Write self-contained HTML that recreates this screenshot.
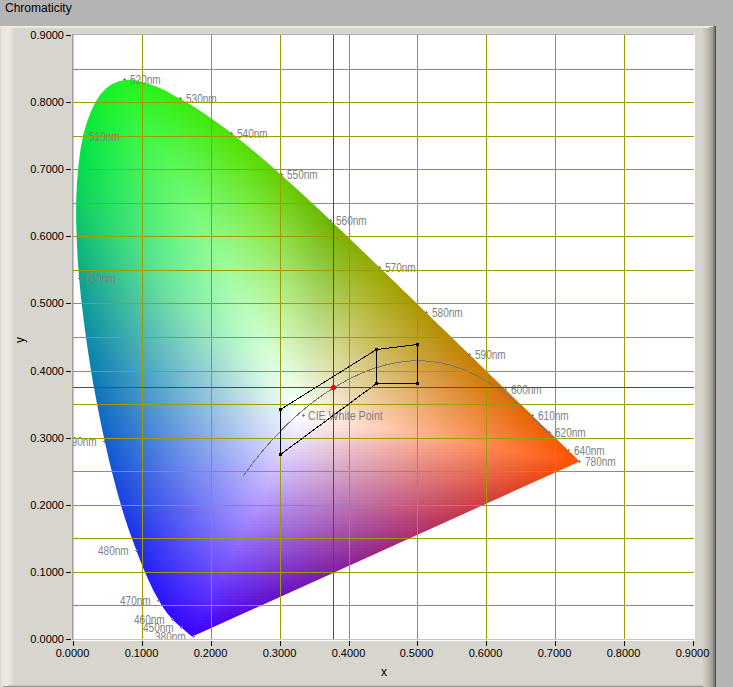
<!DOCTYPE html><html><head><meta charset="utf-8"><style>
html,body{margin:0;padding:0}
body{width:733px;height:687px;overflow:hidden;position:relative;background:#b4b4b4;font-family:"Liberation Sans",sans-serif}
.a{position:absolute}
#title{left:5px;top:1px;font-size:12px;color:#000;white-space:nowrap}
#frame{left:0;top:26px;width:716px;height:661px;background:#d8d4ce}
#plot{left:73px;top:35px;width:621px;height:604px;overflow:hidden;background:linear-gradient(90deg,#c8c8c8 1px,#fff 1px)}
#inner{left:-73px;top:-35px;width:733px;height:687px}
#field{left:0;top:0;width:733px;height:687px;clip-path:polygon(193.4px 636.1px,193.4px 636.1px,193.4px 636.1px,193.4px 636.1px,193.4px 636.1px,193.3px 636.2px,193.3px 636.2px,193.3px 636.2px,193.2px 636.2px,193.2px 636.2px,193.2px 636.2px,193.1px 636.2px,193.1px 636.2px,193.0px 636.2px,193.0px 636.2px,192.9px 636.3px,192.9px 636.3px,192.8px 636.3px,192.8px 636.3px,192.7px 636.3px,192.7px 636.3px,192.6px 636.3px,192.5px 636.3px,192.5px 636.3px,192.4px 636.3px,192.3px 636.3px,192.2px 636.3px,192.2px 636.3px,192.1px 636.3px,192.0px 636.2px,191.8px 636.2px,191.7px 636.2px,191.6px 636.1px,191.4px 636.0px,191.2px 635.9px,191.0px 635.8px,190.8px 635.6px,190.6px 635.5px,190.4px 635.3px,190.1px 635.1px,189.9px 634.9px,189.5px 634.6px,189.2px 634.3px,188.9px 634.1px,188.5px 633.7px,188.1px 633.4px,187.7px 633.0px,187.2px 632.6px,186.8px 632.2px,186.2px 631.7px,185.7px 631.3px,185.1px 630.8px,184.5px 630.2px,183.8px 629.6px,183.0px 629.0px,182.2px 628.3px,181.4px 627.6px,180.5px 626.9px,179.6px 626.1px,178.6px 625.2px,177.5px 624.3px,176.4px 623.2px,175.2px 622.1px,174.0px 620.9px,172.7px 619.6px,171.4px 618.1px,170.0px 616.6px,168.5px 614.8px,166.8px 612.7px,165.1px 610.3px,163.2px 607.5px,161.2px 604.4px,159.0px 600.7px,156.7px 596.6px,154.3px 592.2px,151.7px 587.1px,149.0px 581.2px,146.1px 574.7px,143.0px 567.5px,139.8px 559.5px,136.4px 550.4px,132.7px 540.5px,128.8px 529.7px,124.8px 517.8px,120.8px 504.8px,116.8px 490.6px,112.8px 475.3px,108.7px 458.9px,104.8px 441.5px,100.8px 423.0px,96.9px 403.3px,93.1px 383.0px,89.7px 362.5px,86.6px 341.7px,83.7px 320.3px,81.1px 299.0px,79.1px 278.2px,77.6px 257.9px,76.6px 237.8px,76.1px 218.4px,76.2px 200.1px,77.0px 182.5px,78.4px 165.8px,80.4px 150.1px,83.1px 136.0px,86.5px 123.4px,90.6px 112.2px,95.2px 102.5px,100.3px 94.6px,105.8px 88.6px,111.8px 84.3px,118.2px 81.6px,124.7px 79.9px,131.3px 79.6px,138.2px 80.7px,145.2px 82.7px,152.2px 85.0px,159.2px 87.8px,166.2px 91.1px,173.2px 94.9px,180.1px 98.7px,186.8px 102.5px,193.4px 106.5px,199.9px 110.7px,206.4px 115.0px,212.8px 119.4px,219.1px 123.9px,225.4px 128.5px,231.7px 133.3px,237.9px 138.2px,244.2px 143.2px,250.4px 148.2px,256.6px 153.4px,262.8px 158.7px,269.0px 164.0px,275.1px 169.4px,281.3px 174.9px,287.4px 180.4px,293.6px 186.0px,299.7px 191.6px,305.9px 197.3px,312.0px 203.0px,318.2px 208.8px,324.4px 214.6px,330.5px 220.4px,336.7px 226.2px,342.8px 232.1px,348.9px 238.0px,355.0px 243.8px,361.2px 249.7px,367.3px 255.5px,373.4px 261.4px,379.4px 267.2px,385.5px 273.1px,391.5px 278.9px,397.4px 284.6px,403.3px 290.4px,409.2px 296.1px,415.1px 301.8px,420.8px 307.4px,426.6px 312.9px,432.2px 318.4px,437.8px 323.9px,443.4px 329.3px,448.8px 334.5px,454.2px 339.7px,459.5px 344.9px,464.7px 349.9px,469.7px 354.8px,474.7px 359.6px,479.6px 364.4px,484.3px 369.0px,488.8px 373.4px,493.2px 377.7px,497.4px 381.7px,501.5px 385.7px,505.4px 389.5px,509.3px 393.2px,513.0px 396.9px,516.6px 400.4px,520.0px 403.7px,523.3px 406.8px,526.4px 409.8px,529.3px 412.6px,532.2px 415.3px,534.8px 417.9px,537.4px 420.4px,539.7px 422.7px,542.0px 424.9px,544.2px 427.0px,546.2px 429.0px,548.1px 430.8px,549.9px 432.6px,551.6px 434.2px,553.2px 435.8px,554.7px 437.2px,556.1px 438.6px,557.5px 440.0px,558.8px 441.2px,560.0px 442.4px,561.2px 443.5px,562.3px 444.6px,563.4px 445.7px,564.4px 446.7px,565.4px 447.6px,566.3px 448.5px,567.2px 449.4px,568.0px 450.2px,568.8px 451.0px,569.6px 451.7px,570.3px 452.4px,570.9px 453.0px,571.6px 453.6px,572.1px 454.2px,572.7px 454.7px,573.2px 455.2px,573.6px 455.6px,574.1px 456.0px,574.5px 456.4px,574.9px 456.8px,575.2px 457.2px,575.6px 457.5px,575.9px 457.8px,576.1px 458.1px,576.4px 458.3px,576.6px 458.5px,576.8px 458.7px,577.0px 458.9px,577.1px 459.0px,577.3px 459.2px,577.5px 459.4px,577.6px 459.5px,577.8px 459.6px,577.9px 459.8px,578.0px 459.9px,578.1px 460.0px,578.2px 460.1px,578.4px 460.2px,578.5px 460.4px,578.6px 460.5px,578.7px 460.6px,578.8px 460.7px,579.0px 460.8px,579.1px 460.9px,579.1px 461.0px,579.2px 461.1px,579.3px 461.1px,579.4px 461.2px,579.4px 461.3px,579.5px 461.3px,579.5px 461.3px,579.5px 461.4px,579.6px 461.4px,579.6px 461.4px,579.6px 461.4px,579.6px 461.4px,579.6px 461.5px)}
#field i{position:absolute;display:block}
.wl{position:absolute;font-size:12px;color:#808080;white-space:nowrap;line-height:14px;transform-origin:0 0}
.ax{position:absolute;font-size:11px;color:#000;white-space:nowrap;line-height:12px}
</style></head><body>

<div id="title" class="a">Chromaticity</div>
<div id="frame" class="a">
<div class="a" style="left:0;top:2px;width:14px;height:659px;background:linear-gradient(90deg,#d7d3cb 0px,#e1ded4 1px,#eae6dc 2px,#ebe8e1 5px,#ece9e4 9px,#e4e1d8 11px,#dedbd1 13px,#d8d4ce 14px)"></div>
<div class="a" style="left:703px;top:0;width:13px;height:661px;background:linear-gradient(90deg,#d0ccc0 1px,#c4c0b8 3.5px,#b4b0a8 6.5px,#a09b94 9.5px,#78766e 11.5px,#50504a 12.5px)"></div>
<div class="a" style="left:0;top:0;width:713px;height:1px;background:linear-gradient(90deg,#e8e8ec,#f0ece2 4px,#f0ece2)"></div>
<div class="a" style="left:0;top:1px;width:709px;height:1px;background:#ece8de"></div>
<div class="a" style="left:8px;top:659px;width:695px;height:1px;background:#c8c4bc"></div>
<div class="a" style="left:3px;top:660px;width:700px;height:1px;background:#9a968e"></div>
</div>
<div class="a" style="left:72px;top:33px;width:623px;height:1px;background:#dfdbd1"></div>
<div class="a" style="left:72px;top:34px;width:622px;height:1px;background:#aaaaaa"></div>
<div class="a" style="left:72px;top:34px;width:1px;height:606px;background:#a0a0a0"></div>
<div class="a" style="left:73px;top:639px;width:621px;height:1px;background:#c4c4c4"></div>
<div class="a" style="left:72px;top:640px;width:623px;height:1px;background:#fff"></div>
<div class="a" style="left:694px;top:34px;width:1px;height:607px;background:#fff"></div>
<div id="plot" class="a"><div id="inner" class="a">
<div id="field" class="a"><i style="left:122px;top:77px;width:18px;height:3px;background:linear-gradient(90deg,#1df51f,#20f41d,#22f31b,#25f21a)"></i>
<i style="left:112px;top:80px;width:42px;height:3px;background:linear-gradient(90deg,#19f323,#1bf421,#1ff51f,#21f41e,#23f31c,#25f219,#28f118,#2bf016)"></i>
<i style="left:107px;top:83px;width:54px;height:3px;background:linear-gradient(90deg,#17f125,#1af323,#1df423,#20f521,#23f420,#25f31e,#27f21b,#28f118,#2bf016,#2eef14)"></i>
<i style="left:103px;top:86px;width:66px;height:3px;background:linear-gradient(90deg,#15f027,#18f226,#1cf325,#1ff425,#22f523,#25f522,#27f320,#29f21d,#2af11a,#2cf016,#2fee14,#32ed12)"></i>
<i style="left:100px;top:89px;width:72px;height:3px;background:linear-gradient(90deg,#13f029,#17f128,#1bf228,#1ff327,#22f426,#25f525,#28f424,#2af322,#2bf21e,#2df11b,#2ef017,#30ee13,#33ed11)"></i>
<i style="left:98px;top:92px;width:78px;height:3px;background:linear-gradient(90deg,#12ef2a,#15f029,#1af12a,#1ef22a,#22f429,#25f528,#28f527,#2af425,#2cf322,#2ef21f,#2ff01b,#30ef17,#31ed12,#35ec10)"></i>
<i style="left:96px;top:95px;width:90px;height:3px;background:linear-gradient(90deg,#10ee2c,#14ef2b,#19f12c,#1ef22c,#22f32b,#25f42b,#29f529,#2bf528,#2df426,#2ff323,#30f120,#32f01c,#33ee17,#33ed12,#36eb0f,#3aea0d)"></i>
<i style="left:94px;top:98px;width:96px;height:3px;background:linear-gradient(90deg,#0fed2d,#13ef2d,#18f02d,#1df12e,#22f22e,#25f42d,#29f52c,#2cf52b,#2ef429,#30f327,#32f224,#33f120,#34ef1c,#35ee17,#36ec12,#38eb0e,#3be90c)"></i>
<i style="left:92px;top:101px;width:102px;height:3px;background:linear-gradient(90deg,#0ded2f,#12ee2e,#17ef2f,#1cf12f,#21f230,#25f330,#29f42f,#2cf52e,#2ff52c,#31f42a,#33f328,#34f224,#35f020,#36ef1c,#37ed17,#38ec11,#3aea0d,#3de90b)"></i>
<i style="left:91px;top:104px;width:108px;height:3px;background:linear-gradient(90deg,#0cec30,#11ed30,#17ef30,#1cf031,#21f132,#25f332,#29f431,#2df530,#30f62f,#32f52d,#34f42b,#35f228,#37f124,#38f020,#39ee1b,#3aec16,#3aeb10,#3ce90b,#3fe809)"></i>
<i style="left:89px;top:107px;width:114px;height:3px;background:linear-gradient(90deg,#0beb31,#0fed31,#15ee32,#1bef33,#20f133,#25f234,#29f334,#2df433,#30f532,#33f530,#35f42f,#37f32c,#38f228,#39f124,#3aef20,#3bee1b,#3cec15,#3dea10,#3ee80a,#41e708)"></i>
<i style="left:88px;top:110px;width:120px;height:3px;background:linear-gradient(90deg,#09eb33,#0eec32,#15ee33,#1aef34,#20f035,#25f236,#29f336,#2df435,#31f534,#34f633,#36f532,#38f42f,#39f32c,#3bf128,#3cf024,#3dee1f,#3eed1a,#3eeb14,#3fe90e,#40e809,#44e606)"></i>
<i style="left:87px;top:113px;width:126px;height:3px;background:linear-gradient(90deg,#08ea34,#0dec34,#14ed35,#1aee36,#20f037,#25f137,#29f238,#2ef337,#31f537,#34f635,#37f534,#39f432,#3bf32f,#3cf22c,#3df128,#3eef23,#3fed1e,#40ec18,#41ea13,#41e80c,#42e707,#46e505)"></i>
<i style="left:86px;top:116px;width:132px;height:3px;background:linear-gradient(90deg,#07e935,#0ceb35,#13ec36,#19ee37,#1fef38,#25f139,#2af23a,#2ef33a,#32f439,#35f538,#38f637,#3af535,#3cf433,#3ef32f,#3ff12b,#40f027,#41ee22,#42ed1d,#42eb17,#43e911,#43e70b,#45e606,#49e403)"></i>
<i style="left:85px;top:119px;width:138px;height:3px;background:linear-gradient(90deg,#06e936,#0bea36,#12ec38,#18ed39,#1eef3a,#24f03b,#29f13b,#2ef33c,#32f43b,#36f53b,#39f639,#3bf538,#3df436,#3ff333,#40f22f,#41f02b,#42ef26,#43ed21,#44ec1b,#44ea15,#45e80f,#45e609,#47e504,#4be302)"></i>
<i style="left:84px;top:122px;width:144px;height:3px;background:linear-gradient(90deg,#04e838,#0aea38,#11eb39,#17ed3a,#1eee3b,#24f03c,#29f13d,#2ef23e,#32f33d,#36f53d,#39f63c,#3cf63b,#3ff539,#40f436,#42f333,#43f12f,#44f02a,#45ee25,#46ec20,#46eb1a,#47e914,#47e70d,#47e506,#4ae403,#4ee200)"></i>
<i style="left:83px;top:125px;width:144px;height:3px;background:linear-gradient(90deg,#03e839,#09e939,#10eb3a,#17ec3c,#1dee3d,#23ef3e,#29f03f,#2ef23f,#33f340,#37f43f,#3af53e,#3df63d,#40f53c,#42f439,#43f336,#44f233,#46f02e,#46ef29,#47ed24,#48ec1e,#48ea18,#49e812,#49e60b,#4ae404,#4de301)"></i>
<i style="left:82px;top:128px;width:150px;height:3px;background:linear-gradient(90deg,#02e73a,#07e83a,#0fea3c,#15ec3d,#1ced3e,#22ef3f,#28f040,#2ef141,#33f342,#37f441,#3bf541,#3ef640,#41f63e,#43f53d,#44f43a,#46f336,#47f132,#48f02d,#49ee28,#4aec23,#4aeb1d,#4be916,#4be710,#4be509,#4ce302,#4fe100)"></i>
<i style="left:81px;top:131px;width:156px;height:3px;background:linear-gradient(90deg,#00e63c,#06e83b,#0de93d,#14eb3e,#1bed40,#22ee41,#28ef42,#2df143,#33f243,#37f343,#3bf443,#3ff642,#42f641,#44f540,#46f43d,#47f33a,#49f236,#4af031,#4aef2c,#4bed27,#4ceb21,#4cea1b,#4de814,#4de60e,#4de407,#4ee200,#51df00)"></i>
<i style="left:80px;top:134px;width:162px;height:3px;background:linear-gradient(90deg,#00e53d,#04e73d,#0ce93e,#13ea40,#1aec41,#21ed42,#27ef43,#2df044,#32f245,#37f346,#3bf445,#3ff545,#42f644,#45f642,#47f540,#49f43d,#4af23a,#4bf135,#4cf030,#4dee2b,#4eec25,#4eea1f,#4fe919,#4fe712,#4fe50b,#4fe304,#50e000,#53dd00)"></i>
<i style="left:80px;top:137px;width:168px;height:3px;background:linear-gradient(90deg,#01e43e,#04e73e,#0ce840,#13ea41,#1aec43,#21ed44,#27ef45,#2df046,#33f147,#38f347,#3cf447,#40f547,#44f646,#46f645,#49f543,#4af440,#4cf33d,#4df238,#4ef034,#4fee2e,#4fed29,#50eb23,#50e91d,#51e716,#51e50f,#51e308,#51e002,#53dd00,#56db00)"></i>
<i style="left:79px;top:140px;width:168px;height:3px;background:linear-gradient(90deg,#01e340,#03e63f,#0ae841,#12e942,#19eb44,#20ed45,#26ee47,#2df048,#32f149,#38f249,#3df349,#41f549,#44f649,#47f747,#4af646,#4cf543,#4df440,#4ef23c,#4ff138,#50ef33,#51ee2d,#52ec27,#52ea21,#53e81b,#53e614,#53e40d,#53e206,#53de01,#55db00)"></i>
<i style="left:79px;top:143px;width:174px;height:3px;background:linear-gradient(90deg,#01e241,#04e541,#0ae742,#11e944,#19eb45,#20ec47,#27ee48,#2def49,#33f14a,#38f24b,#3df34b,#42f44b,#45f54b,#48f74a,#4bf648,#4df546,#4ff443,#50f33f,#51f13b,#52f036,#53ee30,#53ec2b,#54eb25,#54e91e,#55e717,#55e510,#55e309,#55df04,#55dc00,#58d900)"></i>
<i style="left:78px;top:146px;width:180px;height:3px;background:linear-gradient(90deg,#02e143,#04e343,#09e644,#10e845,#18ea47,#1fec48,#26ed4a,#2cef4b,#32f04c,#38f14d,#3df34d,#42f44d,#46f54d,#49f64c,#4cf74b,#4ef649,#50f546,#51f343,#53f23f,#54f03a,#54ef35,#55ed2f,#56eb29,#56ea23,#56e81c,#57e615,#57e40e,#57e008,#56dd03,#57da00,#5ad700)"></i>
<i style="left:78px;top:149px;width:180px;height:3px;background:linear-gradient(90deg,#02e044,#05e344,#0ae545,#10e847,#17ea48,#1feb4a,#26ed4b,#2cee4c,#33f04e,#38f14e,#3ef24f,#43f44f,#47f54f,#4af64f,#4df74d,#50f64c,#52f549,#53f446,#54f242,#55f13d,#56ef38,#57ee33,#57ec2d,#58ea26,#58e820,#59e619,#59e411,#58e10c,#58de06,#57da01,#5ad700)"></i>
<i style="left:77px;top:152px;width:186px;height:3px;background:linear-gradient(90deg,#03de46,#05e146,#0ae447,#0fe748,#16e949,#1deb4b,#24ec4c,#2bee4e,#32ef4f,#38f150,#3ef251,#43f351,#47f451,#4bf651,#4ef750,#51f74f,#53f64c,#54f449,#56f346,#57f241,#58f03c,#59ee37,#59ed31,#5aeb2b,#5ae924,#5ae71e,#5be516,#5ae210,#5adf0b,#59db05,#59d800,#5cd500)"></i>
<i style="left:77px;top:155px;width:192px;height:3px;background:linear-gradient(90deg,#03dd47,#06e047,#0be348,#10e64a,#16e84b,#1dea4c,#24ec4e,#2bed4f,#32ef51,#38f052,#3ef253,#43f353,#48f453,#4cf553,#4ff752,#52f751,#54f64f,#56f54c,#58f449,#59f244,#5af140,#5aef3a,#5bed34,#5cec2e,#5cea28,#5ce821,#5ce61a,#5ce313,#5ce00e,#5bdc08,#5bd803,#5cd500,#5fd200)"></i>
<i style="left:76px;top:158px;width:192px;height:3px;background:linear-gradient(90deg,#03dc49,#06df49,#0be24a,#10e54b,#15e84c,#1ce94e,#23eb4f,#2aed51,#31ee52,#37f053,#3df154,#43f355,#48f455,#4cf555,#50f655,#53f753,#56f752,#57f550,#59f44c,#5af348,#5bf144,#5cf03e,#5dee39,#5dec33,#5eeb2d,#5ee926,#5ee71f,#5ee517,#5ee112,#5ddd0d,#5dda07,#5cd601,#5ed300)"></i>
<i style="left:76px;top:161px;width:198px;height:3px;background:linear-gradient(90deg,#04db4a,#06de4a,#0ce14b,#11e44d,#15e74e,#1be94f,#23eb51,#2aec52,#31ee54,#38f055,#3ef156,#44f257,#49f457,#4df557,#51f657,#54f756,#57f754,#59f652,#5bf54f,#5cf34b,#5df247,#5ef042,#5eef3c,#5fed36,#5feb30,#60e929,#60e722,#60e51b,#60e216,#5fde10,#5fdb0a,#5ed705,#5ed300,#61d000)"></i>
<i style="left:76px;top:164px;width:204px;height:3px;background:linear-gradient(90deg,#04da4c,#07dd4c,#0ce04d,#11e34e,#16e64f,#1be951,#23ea52,#2aec54,#31ee55,#38ef56,#3ef158,#44f258,#49f359,#4ef559,#52f659,#55f758,#58f757,#5af655,#5cf552,#5ef44e,#5ff24a,#5ff145,#60ef40,#61ed3a,#61ec34,#62ea2d,#62e826,#62e61f,#62e319,#61df14,#61db0e,#60d808,#5fd402,#61d100,#64ce00)"></i>
<i style="left:76px;top:167px;width:204px;height:3px;background:linear-gradient(90deg,#04d94d,#08dc4d,#0ddf4f,#12e250,#17e551,#1ce852,#22ea54,#2aec55,#31ed57,#38ef58,#3ef059,#44f25a,#4af35b,#4ff45b,#53f65b,#57f75a,#5af859,#5cf758,#5ef555,#5ff451,#60f34d,#61f148,#62f043,#63ee3d,#63ec37,#64ea31,#64e82a,#64e622,#64e31c,#63e017,#63dc11,#62d80c,#61d506,#61d100,#64ce00)"></i>
<i style="left:75px;top:170px;width:210px;height:3px;background:linear-gradient(90deg,#05d84f,#08db4f,#0dde50,#12e151,#17e452,#1ce754,#21e955,#29eb56,#30ed58,#37ee59,#3ef05b,#44f15c,#4af35d,#4ff45d,#53f55d,#57f65d,#5af75c,#5df75a,#5ff658,#61f555,#62f351,#63f24c,#64f047,#64ef42,#65ed3c,#65eb35,#66e92e,#66e727,#66e521,#65e11b,#65dd16,#64da10,#63d60a,#63d204,#63cf00,#65cc00)"></i>
<i style="left:75px;top:173px;width:210px;height:3px;background:linear-gradient(90deg,#05d750,#08da50,#0edd52,#13e053,#18e354,#1de655,#22e956,#28eb58,#30ec59,#37ee5b,#3eef5c,#44f15d,#4af25e,#4ff45f,#54f55f,#58f65f,#5cf75e,#5ef75d,#61f65b,#62f558,#64f454,#65f250,#65f14a,#66ef45,#67ed3f,#67ec39,#67ea32,#68e82b,#68e524,#67e21f,#67de19,#66db13,#65d70d,#65d307,#64cf01,#65cc00)"></i>
<i style="left:75px;top:176px;width:216px;height:3px;background:linear-gradient(90deg,#05d652,#09d952,#0edc53,#13df54,#19e256,#1ee557,#22e858,#28ea59,#30ec5b,#37ee5c,#3eef5e,#44f15f,#4af260,#50f361,#55f561,#59f661,#5df760,#60f85f,#62f75e,#64f65b,#65f457,#66f353,#67f14e,#68f048,#68ee42,#69ec3c,#69ea36,#6ae82e,#6ae627,#69e322,#69df1d,#68db17,#67d811,#67d40b,#66d005,#65cc00,#66c800)"></i>
<i style="left:75px;top:179px;width:222px;height:3px;background:linear-gradient(90deg,#06d553,#09d853,#0fdb55,#14de56,#19e157,#1ee459,#23e75a,#28ea5b,#2fec5c,#37ed5e,#3eef5f,#44f061,#4bf262,#51f363,#56f463,#5af663,#5ef763,#61f862,#64f760,#65f65e,#67f55a,#68f356,#69f251,#6af04c,#6aef46,#6bed40,#6beb39,#6be932,#6ce72b,#6be325,#6be020,#6adc1a,#69d814,#69d40e,#68d108,#66cc02,#66c900,#67c500)"></i>
<i style="left:74px;top:182px;width:222px;height:3px;background:linear-gradient(90deg,#06d355,#09d655,#0fd956,#14dc57,#19df59,#1ee35a,#23e55b,#28e85c,#2eeb5e,#35ed5f,#3dee61,#44f062,#4af163,#50f364,#55f465,#5af565,#5ef665,#62f764,#65f863,#67f761,#68f55e,#6af45a,#6bf355,#6bf150,#6cef4a,#6dee44,#6dec3e,#6dea37,#6de830,#6de52a,#6de124,#6cdd1f,#6bda19,#6bd613,#6ad20d,#69ce07,#66c900,#67c600)"></i>
<i style="left:74px;top:185px;width:228px;height:3px;background:linear-gradient(90deg,#07d256,#0ad556,#0fd857,#15db59,#1adf5a,#1fe25b,#24e55d,#29e85e,#2eea5f,#35ec61,#3dee62,#44ef64,#4af165,#50f266,#56f467,#5bf567,#5ff667,#63f766,#66f865,#68f763,#6af661,#6bf55d,#6cf358,#6df253,#6ef04e,#6eee48,#6fec41,#6fea3a,#6fe833,#6fe52d,#6fe228,#6ede22,#6dda1c,#6dd716,#6cd310,#6bcf0a,#68ca04,#67c600,#68c300)"></i>
<i style="left:74px;top:188px;width:228px;height:3px;background:linear-gradient(90deg,#07d158,#0ad458,#10d759,#15da5a,#1bde5c,#20e15d,#25e45e,#2ae760,#2fea61,#35ec62,#3ded64,#44ef65,#4af166,#51f268,#57f369,#5cf569,#60f669,#64f769,#67f867,#6af766,#6bf663,#6df560,#6ef45c,#6ff257,#70f051,#70ef4b,#71ed45,#71eb3e,#71e937,#71e630,#71e32b,#70df25,#6fdb20,#6fd71a,#6ed414,#6dd00d,#6acb07,#68c601,#68c300)"></i>
<i style="left:74px;top:191px;width:234px;height:3px;background:linear-gradient(90deg,#07d059,#0bd359,#10d65b,#16d95c,#1bdd5d,#20e05f,#26e360,#2be661,#2fe962,#35eb64,#3ced65,#44ef67,#4bf068,#51f269,#57f36a,#5cf46b,#61f66b,#65f76b,#68f86a,#6bf869,#6df766,#6ef563,#70f45f,#71f35a,#71f154,#72ef4f,#72ed48,#73eb42,#73e93b,#73e734,#72e32e,#72e029,#71dc23,#71d81d,#70d417,#6fd011,#6ccc0b,#6ac704,#68c300,#69c000)"></i>
<i style="left:74px;top:194px;width:234px;height:3px;background:linear-gradient(90deg,#08cf5b,#0bd25b,#11d55c,#16d85e,#1cdc5f,#21df60,#26e262,#2be563,#30e864,#35eb65,#3ced67,#44ee68,#4af06a,#51f16b,#57f36c,#5df46d,#62f56d,#66f76d,#6af86c,#6cf86b,#6ff769,#70f666,#71f562,#72f35d,#73f158,#74f052,#74ee4c,#75ec45,#75ea3e,#75e837,#74e432,#74e12c,#73dd27,#73d921,#72d51b,#71d114,#6ecd0e,#6cc808,#69c301,#69c000)"></i>
<i style="left:74px;top:197px;width:240px;height:3px;background:linear-gradient(90deg,#08ce5c,#0cd15c,#11d45e,#17d75f,#1cdb60,#22de62,#27e163,#2ce464,#31e766,#36ea67,#3cec68,#43ee6a,#4af06b,#51f16c,#58f36e,#5df46f,#63f56f,#67f66f,#6bf86f,#6ef86d,#70f76c,#72f669,#73f565,#74f360,#75f25b,#76f055,#76ee4f,#76ed49,#77eb42,#77e83b,#76e535,#76e130,#75de2a,#75da24,#74d61e,#73d218,#70cd12,#6ec90b,#6bc405,#69c000,#6bbd00)"></i>
<i style="left:74px;top:200px;width:246px;height:3px;background:linear-gradient(90deg,#08cc5e,#0cd05e,#12d35f,#17d661,#1dda62,#22dd63,#28e065,#2de366,#32e667,#37e968,#3cec6a,#43ee6b,#4aef6d,#51f16e,#58f26f,#5ef470,#63f571,#68f671,#6cf771,#6ff870,#72f86e,#73f76b,#75f568,#76f464,#77f25e,#77f159,#78ef53,#78ed4c,#79eb45,#79e93e,#78e639,#78e233,#77de2d,#77db28,#76d721,#75d31b,#72ce15,#70ca0f,#6dc508,#6bc002,#6bbd00,#6cba00)"></i>
<i style="left:74px;top:203px;width:246px;height:3px;background:linear-gradient(90deg,#08cb60,#0dcf5f,#12d261,#18d562,#1dd964,#23dc65,#28df66,#2de268,#33e569,#38e86a,#3ceb6b,#43ed6d,#4aef6e,#51f070,#58f271,#5ef372,#64f573,#69f673,#6df773,#70f872,#73f871,#75f76e,#76f66b,#78f467,#78f362,#79f15c,#7aef56,#7aee50,#7aec49,#7bea42,#7ae63c,#7ae337,#79df31,#78db2b,#78d825,#77d41f,#74cf19,#72ca12,#6fc60c,#6dc105,#6bbd00,#6cba00)"></i>
<i style="left:74px;top:206px;width:252px;height:3px;background:linear-gradient(90deg,#08c961,#0dcd61,#13d162,#18d464,#1ed865,#23db66,#29de68,#2ee169,#33e46a,#38e76c,#3dea6d,#43ed6e,#4aee70,#51f071,#58f273,#5ff374,#64f475,#6af675,#6ef775,#71f874,#74f873,#76f771,#78f66e,#79f56a,#7af365,#7bf260,#7bf05a,#7cee53,#7cec4d,#7cea45,#7ce73f,#7ce43a,#7be034,#7adc2e,#7ad828,#79d422,#76d01c,#74cb16,#71c70f,#6fc209,#6cbd03,#6cb900,#6db700)"></i>
<i style="left:74px;top:209px;width:252px;height:3px;background:linear-gradient(90deg,#08c863,#0dcc63,#13d064,#19d365,#1ed767,#24da68,#29dd69,#2fe06b,#34e36c,#39e66d,#3ee96f,#43ec70,#4aee71,#51f073,#58f174,#5ff375,#65f476,#6af577,#6ff777,#73f877,#76f975,#78f874,#7af771,#7bf56d,#7cf468,#7df263,#7df15d,#7eef57,#7eed50,#7eeb49,#7ee843,#7ee43d,#7de138,#7cdd32,#7cd92c,#7bd526,#78d11f,#76cc19,#73c713,#71c30c,#6ebe06,#6cb900,#6db600)"></i>
<i style="left:74px;top:212px;width:258px;height:3px;background:linear-gradient(90deg,#08c665,#0dca65,#13ce66,#19d267,#1fd668,#25d96a,#2adc6b,#2fdf6c,#35e26e,#3ae56f,#3fe870,#44eb71,#4aee73,#51ef74,#58f176,#5ff277,#65f478,#6bf579,#70f679,#74f879,#77f978,#79f876,#7bf774,#7df670,#7ef46c,#7ef366,#7ff161,#80ef5a,#80ed54,#80eb4d,#80e946,#80e541,#7fe13b,#7ede35,#7eda2f,#7dd629,#7ad123,#78cd1d,#75c816,#73c310,#70bf09,#6eba03,#6db600,#6fb400)"></i>
<i style="left:74px;top:215px;width:258px;height:3px;background:linear-gradient(90deg,#08c566,#0dc966,#13cd67,#1ad168,#1fd46a,#25d86b,#2bdb6c,#30de6e,#35e16f,#3be470,#40e772,#45ea73,#4aed74,#51ef76,#58f177,#5ff279,#66f47a,#6bf57b,#70f67b,#75f77b,#78f97a,#7bf979,#7df776,#7ef673,#7ff56f,#80f36a,#81f264,#81f05e,#82ee57,#82ec50,#82e94a,#82e644,#81e23f,#80df39,#80db33,#7fd72d,#7dd226,#7ace20,#77c91a,#75c413,#72c00d,#70bb06,#6db600,#6fb400)"></i>
<i style="left:74px;top:218px;width:264px;height:3px;background:linear-gradient(90deg,#09c368,#0dc768,#14cb69,#1ad06a,#20d36b,#26d76d,#2bda6e,#31dd6f,#36e071,#3be372,#40e773,#45ea75,#4aec76,#51ef77,#58f079,#5ff27a,#66f37b,#6cf57c,#71f67d,#76f77d,#79f87c,#7cf97b,#7ef879,#80f776,#81f572,#82f46d,#83f267,#83f061,#84ee5b,#84ed54,#84ea4d,#83e748,#83e342,#82df3c,#82db36,#81d830,#7fd32a,#7cce24,#7aca1d,#77c517,#74c010,#72bc0a,#6fb703,#6fb400,#74b200)"></i>
<i style="left:74px;top:221px;width:264px;height:3px;background:linear-gradient(90deg,#09c26a,#0dc66a,#14ca6b,#1ace6c,#20d26d,#26d66e,#2cd96f,#31dc71,#37df72,#3ce374,#41e675,#46e976,#4bec77,#51ee79,#58f07a,#5ff17c,#66f37d,#6cf47e,#72f67f,#76f77f,#7af87f,#7ef97d,#80f87c,#81f779,#83f675,#84f470,#84f36b,#85f165,#85ef5e,#86ed58,#86eb50,#85e74b,#85e445,#84e040,#84dc3a,#83d834,#81d42d,#7ecf27,#7ccb21,#79c61a,#76c114,#74bc0d,#71b807,#70b400,#75b200)"></i>
<i style="left:74px;top:224px;width:270px;height:3px;background:linear-gradient(90deg,#09c06c,#0dc46c,#14c86d,#1acc6e,#20d16f,#27d570,#2cd871,#32db72,#37de74,#3de275,#42e576,#47e878,#4ceb79,#51ee7a,#58ef7c,#5ff17d,#66f37f,#6cf480,#72f581,#77f781,#7bf881,#7ff980,#81f97e,#83f87c,#84f678,#85f573,#86f36e,#87f168,#87f062,#88ee5b,#88ec54,#87e84e,#87e549,#86e143,#85dd3d,#85d937,#83d531,#80d02a,#7ecb24,#7bc71e,#78c217,#76bd11,#73b90a,#72b404,#75b200,#79b100)"></i>
<i style="left:74px;top:227px;width:270px;height:3px;background:linear-gradient(90deg,#09bf6e,#0dc26d,#14c76e,#1acb6f,#21cf70,#27d371,#2dd773,#32da74,#38dd75,#3de177,#43e478,#48e779,#4dea7b,#52ed7c,#58ef7d,#5ff17f,#66f280,#6df481,#73f582,#78f683,#7cf883,#80f982,#83f981,#85f87f,#86f77b,#87f577,#88f471,#89f26c,#89f065,#89ee5f,#8aec57,#89e952,#89e54c,#88e246,#87de41,#87da3a,#85d634,#82d12e,#80cc28,#7dc821,#7bc31b,#78be14,#75b90e,#75b507,#76b201,#7ab100)"></i>
<i style="left:74px;top:230px;width:276px;height:3px;background:linear-gradient(90deg,#09bd6f,#0dc16f,#14c570,#1ac971,#21ce72,#27d273,#2dd674,#33d975,#38dc77,#3ee078,#43e37a,#48e67b,#4ee97c,#52ec7d,#57ef7f,#5ff080,#66f282,#6df383,#73f584,#79f685,#7df785,#81f985,#84f983,#86f881,#88f77e,#89f67a,#8af475,#8af26f,#8bf169,#8bef62,#8bed5b,#8bea55,#8be650,#8ae24a,#89df44,#89db3e,#87d638,#84d231,#82cd2b,#7fc825,#7dc41e,#7abf18,#77ba11,#77b60b,#78b304,#7ab000,#7faf00)"></i>
<i style="left:74px;top:233px;width:276px;height:3px;background:linear-gradient(90deg,#09bc71,#0dbf71,#14c472,#1ac873,#21cc74,#27d075,#2dd476,#33d877,#39db78,#3edf7a,#44e27b,#49e57d,#4ee87e,#53eb7f,#58ee80,#5ff082,#66f283,#6df385,#73f586,#79f687,#7ef787,#82f887,#85fa86,#88f984,#89f781,#8bf67d,#8bf578,#8cf373,#8df16c,#8def66,#8ded5f,#8dea59,#8de753,#8ce34d,#8bdf47,#8bdc41,#89d73b,#86d335,#84ce2e,#81c928,#7fc522,#7cc01b,#79bb15,#79b70e,#7ab408,#7bb101,#7faf00)"></i>
<i style="left:74px;top:236px;width:282px;height:3px;background:linear-gradient(90deg,#09ba73,#0dbe73,#14c274,#1ac675,#21cb76,#27cf77,#2ed377,#34d779,#39da7a,#3fde7b,#44e17d,#4ae47e,#4fe77f,#54ea81,#59ed82,#5ff083,#66f185,#6df386,#74f487,#7af688,#7ff789,#83f889,#87f988,#89f987,#8bf884,#8cf780,#8df57b,#8ef376,#8ff270,#8ff069,#8fee62,#8feb5c,#8fe856,#8ee451,#8de04b,#8ddc45,#8bd83f,#88d338,#86cf32,#83ca2c,#81c525,#7ec11f,#7bbc18,#7cb812,#7db50b,#7eb104,#80af00,#84ae00)"></i>
<i style="left:74px;top:239px;width:282px;height:3px;background:linear-gradient(90deg,#09b875,#0dbc74,#14c075,#1ac576,#21c977,#27cd78,#2ed179,#34d67a,#3ad97b,#3fdd7d,#45e07e,#4ae380,#50e681,#55e982,#5aec83,#5fef85,#66f186,#6df288,#74f489,#7af58a,#80f78b,#84f88b,#88f98a,#8bf989,#8df887,#8ef783,#8ff67f,#90f479,#90f273,#91f06d,#91ee66,#91ec5f,#91e85a,#90e554,#8fe14e,#8fdd48,#8dd942,#8ad43c,#88d035,#85cb2f,#83c629,#80c122,#7dbd1c,#7eb915,#7fb60e,#80b208,#81af01,#85ad00)"></i>
<i style="left:74px;top:242px;width:288px;height:3px;background:linear-gradient(90deg,#09b777,#0dba76,#14bf77,#1ac378,#21c779,#27cc7a,#2ed07b,#34d47c,#3ad87d,#40db7e,#45df80,#4be281,#50e583,#55e884,#5beb85,#5fee86,#66f088,#6df289,#74f48b,#7af58c,#80f78d,#85f88d,#89f98d,#8cfa8b,#8ef989,#90f786,#91f682,#92f47d,#92f377,#93f171,#93ef6a,#93ed63,#93e95d,#92e658,#91e252,#91de4c,#8fda46,#8cd53f,#8ad039,#87cc32,#85c72c,#82c226,#7fbd1f,#80ba18,#81b712,#82b30b,#83b005,#85ad00,#8aac00)"></i>
<i style="left:74px;top:245px;width:288px;height:3px;background:linear-gradient(90deg,#09b578,#0db978,#14bd79,#1ac27a,#21c67b,#27ca7c,#2ece7d,#34d37e,#3ad77f,#40da80,#46de81,#4ce183,#51e484,#56e785,#5bea87,#60ed88,#65f089,#6df28b,#74f38c,#7bf58d,#81f68e,#86f88f,#8af98f,#8dfa8e,#90f98c,#91f889,#92f785,#93f580,#94f37a,#94f174,#95f06d,#95ee66,#94ea61,#94e65b,#93e355,#92df4f,#91da49,#8ed643,#8cd13c,#89cc36,#87c82f,#84c329,#82be22,#82bb1c,#84b815,#85b40f,#86b108,#87ae01,#8aac00)"></i>
<i style="left:75px;top:248px;width:294px;height:3px;background:linear-gradient(90deg,#09b47a,#0eb87a,#15bc7b,#1bc17c,#22c57d,#28c97e,#2fce7f,#35d280,#3cd681,#42da82,#47dd83,#4de184,#52e486,#58e787,#5dea88,#62ed8a,#67f08b,#6ef28c,#75f38e,#7cf58f,#82f690,#87f791,#8cf991,#8ffa90,#91f98e,#93f88b,#94f787,#95f582,#96f47d,#96f276,#97f070,#97ee69,#96ea63,#96e65e,#95e358,#94df52,#93db4b,#90d645,#8ed13f,#8bcd38,#88c832,#86c32b,#84bf25,#85bb1e,#86b818,#87b511,#88b10a,#89ae04,#8cab00,#90aa00)"></i>
<i style="left:75px;top:251px;width:294px;height:3px;background:linear-gradient(90deg,#09b27c,#0eb67c,#15bb7d,#1bbf7e,#22c37f,#28c87f,#2fcc80,#35d081,#3cd482,#42d983,#48dc85,#4ddf86,#53e387,#58e689,#5ee98a,#63ec8b,#68ef8d,#6ef18e,#75f38f,#7cf491,#82f692,#88f793,#8cf893,#90fa92,#93fa91,#95f98e,#96f78b,#97f686,#98f480,#98f27a,#98f073,#99ee6c,#98eb67,#98e761,#97e35b,#96e055,#95db4f,#92d749,#90d242,#8dcd3c,#8ac935,#88c42f,#86c028,#87bc22,#88b91b,#89b515,#8bb20e,#8caf07,#8dab01,#90aa00)"></i>
<i style="left:75px;top:254px;width:300px;height:3px;background:linear-gradient(90deg,#09b17d,#0eb57d,#15b97e,#1bbd7f,#22c280,#28c681,#2fca82,#35cf83,#3cd384,#42d785,#48db86,#4ede88,#54e289,#59e58a,#5ee88c,#63eb8d,#68ee8e,#6df18f,#75f291,#7cf492,#83f694,#88f795,#8df895,#91f994,#94fa93,#96f991,#98f88e,#99f689,#99f584,#9af37d,#9af177,#9bef70,#9aec6a,#9ae864,#99e45f,#98e058,#97dc52,#94d84c,#92d346,#8fce3f,#8cc939,#8ac532,#88c02c,#8abd25,#8bba1f,#8cb618,#8db311,#8eb00b,#8fac04,#91aa00,#95a900)"></i>
<i style="left:75px;top:257px;width:300px;height:3px;background:linear-gradient(90deg,#0aaf7f,#0eb37f,#14b780,#1bbc81,#22c082,#28c483,#2fc984,#35cd85,#3cd186,#42d687,#49da88,#4edd89,#54e18a,#5ae48c,#5fe78d,#64ea8f,#69ed90,#6ef091,#75f292,#7cf494,#83f595,#89f796,#8ef897,#92f997,#96fa96,#98f994,#99f891,#9af78c,#9bf587,#9cf381,#9cf17a,#9cef73,#9cec6d,#9ce968,#9be562,#9ae15c,#99dd56,#96d84f,#94d449,#91cf43,#8fca3c,#8cc636,#8bc12f,#8cbe29,#8dbb22,#8eb71b,#8fb415,#90b10e,#91ad08,#92aa01,#96a800)"></i>
<i style="left:75px;top:260px;width:306px;height:3px;background:linear-gradient(90deg,#0aae81,#0eb181,#14b682,#1bba83,#22be84,#28c385,#2fc786,#35cc87,#3cd088,#42d489,#49d88a,#4fdc8b,#55e08c,#5ae38d,#60e68f,#65e990,#6aec91,#6fef93,#75f294,#7cf395,#83f597,#89f698,#8ff899,#93f999,#97fa98,#99fa97,#9bf993,#9cf78f,#9df68a,#9ef484,#9ef27e,#9ef077,#9eed71,#9eea6b,#9de665,#9ce25f,#9bde59,#98d953,#96d54d,#93d046,#91cb40,#8ec639,#8dc233,#8ebf2c,#8fbc25,#90b81f,#91b518,#93b212,#94ae0b,#95ab04,#97a800,#9aa700)"></i>
<i style="left:76px;top:263px;width:306px;height:3px;background:linear-gradient(90deg,#0aac83,#0fb083,#15b584,#1cb985,#23be86,#29c287,#30c688,#37cb89,#3dcf8a,#44d38b,#4ad78c,#50dc8c,#56df8e,#5ce28f,#61e691,#66e992,#6cec93,#71ef94,#76f296,#7df397,#84f599,#8bf69a,#90f89b,#95f99b,#98fa9a,#9bfa99,#9df996,#9ef792,#9ff68d,#9ff487,#a0f280,#a0f079,#a0ed73,#9fea6e,#9fe668,#9ee262,#9cde5c,#9ad955,#97d54f,#95d049,#92cb42,#90c63c,#90c335,#91bf2e,#92bc28,#93b921,#94b51b,#95b214,#96af0d,#97ab07,#98a800,#9ba700)"></i>
<i style="left:76px;top:266px;width:312px;height:3px;background:linear-gradient(90deg,#0aab84,#0eaf84,#15b385,#1cb786,#23bc87,#29c088,#30c589,#37c98a,#3dcd8b,#44d28c,#4ad68d,#50da8e,#56de8f,#5ce191,#62e592,#67e893,#6ceb95,#71ee96,#76f197,#7df399,#84f59a,#8bf69b,#91f79c,#96f99d,#9afa9c,#9dfa9b,#9ef999,#a0f895,#a1f690,#a1f58a,#a2f384,#a2f17d,#a2ee77,#a1ea71,#a1e76b,#a0e365,#9edf5f,#9cda59,#99d552,#97d14c,#94cc46,#92c73f,#92c438,#93c032,#94bd2b,#95b925,#96b61e,#97b317,#98af11,#9aac0a,#9ba904,#9ca600,#9da500)"></i>
<i style="left:76px;top:269px;width:312px;height:3px;background:linear-gradient(90deg,#0aa986,#0ead86,#15b187,#1cb688,#22ba89,#29bf8a,#30c38b,#36c78c,#3dcc8d,#44d08e,#4ad48f,#50d990,#57dd91,#5de092,#62e494,#68e795,#6dea96,#72ed98,#77f099,#7df29a,#84f49c,#8bf69d,#91f79e,#96f89f,#9bfa9f,#9efb9e,#a0fa9c,#a1f898,#a2f793,#a3f58e,#a4f387,#a4f181,#a4ef7a,#a3eb75,#a3e76f,#a2e469,#a0df63,#9edb5c,#9bd656,#99d14f,#96cd49,#94c842,#94c43c,#95c135,#96be2f,#97ba28,#99b721,#9ab41b,#9bb014,#9cad0e,#9daa07,#9ca600,#9ea400)"></i>
<i style="left:76px;top:272px;width:318px;height:3px;background:linear-gradient(90deg,#0aa888,#0eab88,#15b089,#1cb48a,#22b98b,#29bd8c,#30c18d,#36c68e,#3dca8f,#44ce90,#4ad391,#51d792,#57db93,#5ddf94,#63e395,#68e697,#6ee998,#73ec99,#78ef9a,#7df29c,#84f49d,#8bf59f,#92f7a0,#97f8a1,#9cf9a1,#9ffba0,#a2fa9e,#a3f99b,#a4f796,#a5f691,#a5f48b,#a6f284,#a6f07d,#a5ec78,#a5e872,#a4e46c,#a3e066,#a0dc60,#9dd759,#9bd253,#98ce4c,#96c946,#96c53f,#98c239,#99bf32,#9abb2c,#9bb825,#9cb51e,#9db118,#9eae11,#9fab0a,#9ea704,#9ea400,#a0a200)"></i>
<i style="left:76px;top:275px;width:318px;height:3px;background:linear-gradient(90deg,#0aa68a,#0ea98a,#15ae8b,#1bb28c,#22b78d,#29bb8e,#30c08f,#36c490,#3dc991,#44cd92,#4ad193,#51d694,#57da94,#5dde95,#63e197,#69e598,#6ee899,#74eb9b,#79ee9c,#7ef19d,#84f39f,#8bf5a0,#92f7a1,#98f8a2,#9df9a3,#a0faa2,#a3faa1,#a5f99e,#a6f89a,#a7f694,#a7f48e,#a8f388,#a8f081,#a7ed7b,#a7e976,#a6e570,#a5e169,#a2dc63,#a0d85d,#9dd356,#9ace50,#98ca49,#99c643,#9ac33c,#9bc036,#9cbc2f,#9db928,#9eb622,#9fb21b,#a0af15,#a1ab0e,#a0a707,#9fa301,#a0a200)"></i>
<i style="left:77px;top:278px;width:324px;height:3px;background:linear-gradient(90deg,#0aa58b,#0fa88b,#16ad8d,#1cb18e,#23b68f,#2aba90,#31bf91,#37c392,#3ec893,#45cc93,#4bd094,#52d595,#58d996,#5edd97,#65e198,#6ae49a,#70e89b,#75eb9d,#7aee9e,#7ff19f,#85f3a0,#8cf5a2,#93f6a3,#99f8a4,#9ef9a5,#a2faa4,#a5fba3,#a7f9a0,#a8f89c,#a9f697,#a9f591,#a9f38a,#aaf183,#a9ed7e,#a8e978,#a8e572,#a6e16c,#a4dd66,#a1d85f,#9fd359,#9cce52,#9aca4c,#9bc745,#9cc33f,#9dc038,#9fbd31,#a0b92b,#a1b624,#a2b31d,#a3af17,#a3ab10,#a2a80a,#a1a403,#a1a100,#a2a000)"></i>
<i style="left:77px;top:281px;width:324px;height:3px;background:linear-gradient(90deg,#0aa38c,#0fa78d,#15ab8e,#1cb08f,#23b490,#2ab991,#31bd92,#37c293,#3ec694,#45ca95,#4bcf96,#52d397,#58d798,#5fdc99,#65e09a,#6be39b,#70e79d,#76ea9e,#7bed9f,#80f0a1,#85f3a2,#8cf5a3,#93f6a5,#99f8a6,#9ff9a7,#a3faa7,#a6fba5,#a8faa3,#a9f89f,#aaf79a,#abf594,#abf38e,#abf187,#abee81,#aaea7c,#aae676,#a8e26f,#a6dd69,#a3d963,#a1d45c,#9ecf56,#9ccb4f,#9ec849,#9fc442,#a0c13b,#a1be35,#a2ba2e,#a3b728,#a4b321,#a5b01a,#a4ac14,#a3a80d,#a2a406,#a1a100,#a39f00)"></i>
<i style="left:77px;top:284px;width:330px;height:3px;background:linear-gradient(90deg,#0aa28e,#0ea58e,#15aa90,#1cae91,#23b392,#2ab793,#30bb94,#37c095,#3ec496,#44c997,#4bcd98,#52d199,#58d69a,#5fda9b,#65de9c,#6be29d,#71e59e,#76e9a0,#7ceca1,#81efa2,#86f2a4,#8cf4a5,#93f6a6,#9af7a8,#9ff9a9,#a4faa9,#a8fba8,#aafaa6,#abf9a2,#acf79d,#adf698,#adf491,#adf28a,#adee85,#aceb7f,#ace779,#aae373,#a8de6d,#a5da66,#a3d560,#a0d059,#9fcc53,#a0c84c,#a1c545,#a2c23f,#a3be38,#a4bb32,#a5b82b,#a6b424,#a7b11e,#a6ad17,#a5a910,#a4a50a,#a3a103,#a39f00,#a59d00)"></i>
<i style="left:77px;top:287px;width:330px;height:3px;background:linear-gradient(90deg,#0aa18f,#0ea48f,#15a891,#1cac93,#23b194,#29b595,#30ba96,#37be97,#3ec398,#44c799,#4bcb9a,#52d09b,#58d49c,#5fd89d,#65dd9e,#6be19f,#71e4a0,#77e8a1,#7ceba3,#81eea4,#87f1a5,#8cf4a6,#93f5a8,#9af7a9,#a0f8aa,#a5faab,#a9fbaa,#abfba9,#adf9a5,#aef8a1,#aff69b,#aff495,#aff28e,#afef88,#aeec82,#aee87c,#ace476,#aadf70,#a7da6a,#a5d663,#a2d15d,#a1cd56,#a2c950,#a3c649,#a4c342,#a5bf3c,#a7bc35,#a8b92e,#a9b528,#a9b221,#a8ae1b,#a7aa14,#a6a60d,#a5a207,#a49e00,#a59d00)"></i>
<i style="left:78px;top:290px;width:336px;height:3px;background:linear-gradient(90deg,#0aa090,#0fa391,#16a792,#1dac94,#24b096,#2ab497,#31b998,#38bd99,#3fc29a,#45c69b,#4ccb9c,#53cf9d,#59d39e,#60d89f,#66dca0,#6de0a0,#73e4a2,#78e7a3,#7eeaa4,#83eea6,#88f1a7,#8df3a8,#94f5aa,#9bf7ab,#a1f8ac,#a7faad,#aafbac,#adfbab,#affaa8,#b0f8a3,#b0f69e,#b1f597,#b1f390,#b1ef8b,#b0ec85,#afe87f,#aee479,#abdf72,#a9da6c,#a6d666,#a4d15f,#a4cd58,#a5ca52,#a6c64b,#a7c345,#a8c03e,#a9bc37,#aab931,#abb62a,#aab224,#a9ae1d,#a8aa16,#a7a610,#a6a209,#a59e02,#a69c00,#a79b00)"></i>
<i style="left:78px;top:293px;width:336px;height:3px;background:linear-gradient(90deg,#0a9e91,#0ea192,#15a694,#1caa95,#23ae97,#2ab398,#31b799,#38bc9a,#3fc09b,#45c59c,#4cc99d,#53cd9e,#59d29f,#60d6a0,#66daa1,#6ddfa2,#73e3a3,#79e6a5,#7ee9a6,#84eda7,#89f0a9,#8ef3aa,#94f5ab,#9bf7ad,#a2f8ae,#a7f9af,#abfbaf,#aefbad,#b0faab,#b1f9a6,#b2f7a1,#b3f59b,#b3f394,#b3f08e,#b2ec88,#b1e982,#b0e57c,#ade076,#abdb6f,#a8d669,#a6d262,#a6ce5c,#a7cb55,#a8c74f,#a9c448,#aac142,#abbd3b,#acba34,#adb62e,#acb327,#abaf20,#aaab1a,#a9a713,#a8a30c,#a79f06,#a79b00,#a89a00)"></i>
<i style="left:78px;top:296px;width:342px;height:3px;background:linear-gradient(90deg,#0a9d93,#0ea093,#15a495,#1ca897,#23ad98,#2ab19a,#31b59b,#38ba9c,#3ebe9d,#45c39e,#4cc79f,#53cca0,#59d0a1,#60d4a2,#66d9a3,#6ddda4,#73e1a5,#79e5a6,#7fe8a7,#84eca9,#8aefaa,#8ff2ab,#94f5ad,#9bf6ae,#a2f8b0,#a8f9b0,#acfab1,#b0fbb0,#b2faae,#b3f9aa,#b4f7a4,#b5f69e,#b5f498,#b5f191,#b4ed8c,#b3e986,#b2e580,#b0e179,#addc73,#aad76c,#a8d366,#a8cf5f,#a9cc59,#aac852,#abc54c,#adc245,#aebe3e,#afbb38,#afb731,#aeb32a,#adaf24,#acab1d,#aba816,#aaa410,#a9a009,#a89c02,#a89a00,#aa9800)"></i>
<i style="left:79px;top:299px;width:342px;height:3px;background:linear-gradient(90deg,#0a9c94,#0f9f95,#16a396,#1da898,#24ac9a,#2bb09b,#32b49d,#39b99e,#3fbd9f,#46c2a0,#4dc6a1,#54cba2,#5acfa3,#61d4a4,#67d8a5,#6edca6,#74e0a7,#7be5a8,#80e8a9,#86ebab,#8beeac,#90f1ad,#95f4ae,#9cf6b0,#a3f8b1,#a9f9b2,#aefab3,#b2fbb2,#b4fbb0,#b5f9ac,#b6f8a7,#b6f6a1,#b7f49a,#b6f194,#b6ed8e,#b5ea88,#b4e582,#b1e17c,#afdc75,#acd76f,#a9d368,#abcf62,#accc5b,#adc955,#aec54e,#afc247,#b0bf41,#b1bb3a,#b1b733,#b0b32d,#afb026,#aeac1f,#ada819,#aca412,#aba00b,#aa9c05,#a99900,#aa9800)"></i>
<i style="left:79px;top:302px;width:342px;height:3px;background:linear-gradient(90deg,#0a9a95,#0e9d96,#16a298,#1da699,#23aa9b,#2aaf9d,#31b39e,#38b7a0,#3fbca1,#46c0a2,#4dc5a3,#53c9a4,#5acea5,#61d2a6,#67d6a7,#6edba8,#74dfa9,#7be3aa,#81e7ab,#86eaac,#8cedae,#91f0af,#96f3b0,#9cf6b1,#a3f7b3,#aaf9b4,#affab5,#b3fbb4,#b5fbb3,#b7faaf,#b8f8aa,#b8f6a4,#b9f59e,#b8f297,#b8ee92,#b7ea8c,#b6e685,#b3e27f,#b1dd79,#aed872,#acd46c,#add065,#aecd5f,#afca58,#b0c651,#b1c34b,#b2bf44,#b3bc3d,#b2b837,#b1b430,#b0b02a,#afac23,#aea81c,#ada516,#aca10f,#ab9d08,#aa9901,#ab9700)"></i>
<i style="left:79px;top:305px;width:348px;height:3px;background:linear-gradient(90deg,#0a9997,#0e9c97,#15a099,#1ca49a,#23a99c,#2aad9e,#31b19f,#38b6a1,#3fbaa2,#46bea3,#4dc3a4,#53c7a5,#5acca6,#61d0a7,#67d5a8,#6ed9a9,#74ddaa,#7be2ab,#81e6ac,#87e9ae,#8cecaf,#92efb0,#97f3b2,#9cf5b3,#a3f7b4,#aaf9b6,#b0fab7,#b4fbb6,#b7fbb5,#b8fab2,#b9f9ad,#baf7a8,#baf5a1,#baf39b,#baef95,#b9eb8f,#b8e789,#b5e283,#b3de7c,#b0d976,#aed46f,#afd169,#b0ce62,#b1ca5b,#b3c755,#b4c44e,#b5c048,#b5bd41,#b4b93a,#b3b534,#b2b12d,#b1ad26,#b0a920,#afa519,#aea112,#ad9d0c,#ac9a05,#ac9600,#ad9500)"></i>
<i style="left:80px;top:308px;width:348px;height:3px;background:linear-gradient(90deg,#0a9798,#0f9b98,#169f9a,#1da49c,#24a89e,#2bac9f,#32b1a1,#39b5a3,#40b9a4,#47bea5,#4dc2a6,#54c6a7,#5bcba8,#62cfa9,#68d4aa,#6fd8ab,#76dcac,#7ce1ad,#82e5ae,#88e9af,#8eecb1,#93efb2,#98f2b4,#9df5b5,#a4f7b6,#abf8b8,#b1fab8,#b6fbb9,#b9fcb7,#bafab5,#bbf9b0,#bcf7aa,#bcf5a4,#bcf39d,#bcef97,#bbeb92,#b9e78b,#b7e285,#b4de7f,#b2d978,#b1d572,#b2d16b,#b3ce64,#b4cb5e,#b5c757,#b6c451,#b7c14a,#b7bd43,#b6b93d,#b5b536,#b4b12f,#b3ad29,#b2a922,#b1a51b,#b0a215,#af9e0e,#ae9a07,#ad9601,#ae9400)"></i>
<i style="left:80px;top:311px;width:354px;height:3px;background:linear-gradient(90deg,#0a9699,#0e999a,#159e9b,#1da29d,#24a69f,#2baba0,#32afa2,#39b3a4,#40b8a5,#47bca7,#4dc0a8,#54c5a9,#5bc9aa,#62ceab,#68d2ac,#6fd7ad,#75dbae,#7cdfaf,#82e3b0,#89e8b1,#8eebb2,#94eeb4,#99f1b5,#9ef4b6,#a4f7b8,#abf8b9,#b2faba,#b6fbbb,#bafcba,#bcfbb7,#bdf9b3,#bef8ae,#bef6a7,#bef4a0,#bef09b,#bdec95,#bbe88f,#b9e388,#b6df82,#b4da7c,#b3d675,#b4d26e,#b5cf68,#b6cc61,#b7c85b,#b8c554,#b9c24d,#b8be47,#b7ba40,#b6b639,#b5b233,#b4ae2c,#b3aa25,#b2a61f,#b1a218,#b09e11,#af9a0b,#ae9704,#ae9400,#b09200)"></i>
<i style="left:80px;top:314px;width:354px;height:3px;background:linear-gradient(90deg,#0a959a,#0e989b,#159c9d,#1ca09e,#23a5a0,#2aa9a2,#31ada3,#38b2a5,#3fb6a7,#46baa8,#4dbfaa,#54c3ab,#5bc8ac,#61ccad,#68d0ae,#6fd5af,#75d9b0,#7cdeb1,#83e2b2,#89e6b3,#8feab4,#94edb5,#9af0b7,#9ff3b8,#a4f6b9,#abf8bb,#b2f9bc,#b7fbbd,#bbfcbc,#bdfbba,#bffab6,#c0f8b1,#c0f6ab,#c0f4a4,#c0f19e,#bfed98,#bde992,#bbe48c,#b8df86,#b6db7f,#b5d778,#b6d372,#b7d06b,#b9cd65,#bac95e,#bbc657,#bbc251,#babe4a,#b9bb43,#b8b73d,#b7b336,#b6af2f,#b5ab29,#b4a722,#b3a31b,#b29f15,#b19b0e,#b09707,#af9301,#b09200)"></i>
<i style="left:81px;top:317px;width:360px;height:3px;background:linear-gradient(90deg,#0a939c,#0f979c,#169b9e,#1da0a0,#24a4a1,#2ba8a3,#32ada5,#39b1a6,#40b5a8,#47b9aa,#4ebeab,#55c2ad,#5cc7ae,#62cbaf,#69d0b0,#70d4b1,#77d8b2,#7dddb3,#84e1b4,#8ae5b5,#90e9b6,#96edb7,#9bf0b8,#a1f3ba,#a5f6bb,#acf8bc,#b3f9be,#b9fbbf,#bdfcbe,#bffbbd,#c1fab9,#c1f8b3,#c2f7ad,#c2f4a6,#c1f1a1,#c1ed9b,#bfe995,#bde48e,#badf88,#b7db81,#b8d77b,#b9d474,#bad06e,#bbcd67,#bcca60,#bdc65a,#bdc353,#bcbf4c,#bbbb46,#bab73f,#b9b338,#b8af32,#b7ab2b,#b6a724,#b5a31e,#b49f17,#b39b10,#b2970a,#b19303,#b19100,#b29000)"></i>
<i style="left:81px;top:320px;width:360px;height:3px;background:linear-gradient(90deg,#0a929d,#0e959d,#159a9f,#1c9ea1,#24a2a3,#2ba7a4,#32aba6,#39afa8,#40b4a9,#47b8ab,#4ebcad,#55c0ae,#5bc5af,#62c9b0,#69ceb1,#70d2b2,#76d7b3,#7ddbb4,#84dfb5,#8ae4b6,#90e8b7,#96ecb9,#9cefba,#a1f2bb,#a6f5bd,#acf7be,#b3f9bf,#b9fac0,#befcc0,#c1fcbf,#c2fbbc,#c3f9b7,#c4f7b1,#c4f5aa,#c3f2a4,#c3ee9e,#c1ea98,#bfe592,#bce08b,#b9db85,#bad87e,#bbd578,#bcd171,#bdce6a,#becb64,#c0c75d,#bfc357,#bebf50,#bdbb49,#bcb843,#bbb43c,#bab035,#b9ac2f,#b8a828,#b7a421,#b6a01b,#b59c14,#b4980d,#b39407,#b29000,#b38f00)"></i>
<i style="left:82px;top:323px;width:366px;height:3px;background:linear-gradient(90deg,#0a919e,#0f949f,#1699a1,#1d9da2,#24a1a4,#2ba6a6,#32aaa7,#39aea9,#41b3ab,#47b7ac,#4ebbae,#55c0b0,#5cc4b1,#63c8b2,#6acdb3,#71d1b4,#77d6b5,#7edab6,#85dfb7,#8be3b8,#92e7b9,#98ebba,#9deebc,#a3f1bd,#a8f5be,#adf7c0,#b5f9c1,#bbfac2,#c0fbc3,#c3fcc1,#c4fbbe,#c5f9b9,#c6f7b3,#c6f5ac,#c5f2a7,#c5eea1,#c3ea9b,#c0e594,#bee08e,#bbdc87,#bcd881,#bed57a,#bfd273,#c0ce6d,#c1cb66,#c1c760,#c0c359,#bfbf52,#bebc4c,#bdb845,#bcb43e,#bbb038,#baac31,#b9a82a,#b8a424,#b7a01d,#b69c16,#b59810,#b59409,#b49002,#b48e00,#b58d00)"></i>
<i style="left:82px;top:326px;width:366px;height:3px;background:linear-gradient(90deg,#0a8f9f,#0f93a0,#1697a2,#1d9ba3,#24a0a5,#2ba4a7,#32a8a9,#39adaa,#40b1ac,#47b5ae,#4ebaaf,#55beb1,#5cc2b3,#63c7b4,#6acbb5,#71d0b6,#77d4b7,#7ed9b8,#85ddb9,#8be1ba,#92e6bb,#98eabc,#9eedbd,#a3f0bf,#a9f4c0,#aef7c1,#b5f8c3,#bbfac4,#c0fbc5,#c4fcc4,#c6fbc1,#c7fabd,#c7f8b7,#c8f6b0,#c7f3aa,#c7efa4,#c5ea9e,#c2e698,#c0e191,#bedd8b,#bfd984,#c0d67d,#c1d377,#c2cf70,#c3cc6a,#c3c863,#c2c45c,#c1c056,#c0bc4f,#bfb848,#beb542,#bdb13b,#bcad34,#bba92e,#baa527,#b9a120,#b89d1a,#b79913,#b6950c,#b69006,#b58d00,#b68c00)"></i>
<i style="left:82px;top:329px;width:372px;height:3px;background:linear-gradient(90deg,#0a8ea1,#0e91a1,#1595a3,#1c9aa5,#239ea6,#2ba3a8,#32a7aa,#39abab,#40b0ad,#47b4af,#4eb8b0,#55bdb2,#5cc1b4,#63c5b5,#6ac9b7,#70ceb8,#77d2b9,#7ed7ba,#85dbbb,#8be0bc,#92e4bd,#98e8be,#9eecbf,#a4f0c0,#a9f3c2,#aef6c3,#b4f8c4,#bbfac6,#c1fbc6,#c5fcc6,#c7fcc4,#c9fac0,#c9f9ba,#caf7b3,#c9f3ae,#c8f0a8,#c7eba1,#c4e79b,#c2e295,#c0dd8e,#c1da88,#c2d781,#c3d37a,#c4d074,#c6cd6d,#c5c966,#c4c560,#c3c159,#c2bd52,#c1b94c,#c0b545,#bfb13e,#bead38,#bdaa31,#bca62a,#bba124,#ba9d1d,#b99916,#b89510,#b89109,#b78d02,#b78b00,#b88a00)"></i>
<i style="left:83px;top:332px;width:372px;height:3px;background:linear-gradient(90deg,#0a8da2,#0f90a3,#1694a4,#1d99a6,#249da8,#2ba2a9,#32a6ab,#39aaad,#40afaf,#48b3b0,#4fb7b2,#56bcb4,#5dc0b5,#64c4b7,#6bc9b9,#71cdba,#78d1bb,#7fd6bc,#86dabd,#8cdfbe,#93e3bf,#99e7c0,#a0ecc1,#a5efc2,#abf2c3,#b0f5c5,#b5f8c6,#bdfac7,#c3fbc8,#c7fcc8,#c9fcc6,#cafac2,#cbf9bd,#cbf7b6,#cbf3b0,#caf0aa,#c8eba4,#c6e79e,#c3e297,#c2de91,#c4da8a,#c5d783,#c6d47d,#c7d076,#c7cd6f,#c6c969,#c5c562,#c4c15b,#c3bd55,#c2b94e,#c1b547,#c0b141,#bfae3a,#beaa33,#bda62d,#bda126,#bc9d1f,#bb9919,#ba9512,#b9910b,#b88d05,#b88a00,#b98900)"></i>
<i style="left:83px;top:335px;width:372px;height:3px;background:linear-gradient(90deg,#0a8ba3,#0e8ea4,#1593a6,#1d97a7,#249ca9,#2ba0ab,#32a4ac,#39a9ae,#40adb0,#47b1b1,#4eb6b3,#55bab5,#5cbeb6,#63c3b8,#6ac7ba,#71cbbb,#78d0bc,#7fd4be,#85d9bf,#8cddbf,#93e2c0,#99e6c1,#a0eac2,#a6eec4,#abf1c5,#b1f4c6,#b6f7c7,#bdf9c9,#c3fbca,#c8fcca,#cbfcc9,#ccfbc6,#cdf9c0,#cdf7b9,#cdf4b3,#ccf0ae,#cbeca7,#c8e7a1,#c5e39b,#c5df94,#c6db8d,#c7d887,#c8d580,#c9d179,#c9ce73,#c8ca6c,#c7c666,#c6c25f,#c5be58,#c4ba52,#c3b64b,#c2b244,#c1ae3e,#c0aa37,#bfa630,#bea229,#be9e23,#bd9a1c,#bc9615,#bb920f,#ba8e08,#b98a01,#ba8800)"></i>
<i style="left:84px;top:338px;width:378px;height:3px;background:linear-gradient(90deg,#0a8aa4,#0f8ea5,#1692a7,#1d96a9,#249baa,#2b9fac,#33a3ae,#3aa8af,#41acb1,#48b1b3,#4fb5b5,#56b9b6,#5dbeb8,#64c2ba,#6bc6bb,#72cabd,#79cfbe,#80d3bf,#86d8c0,#8ddcc1,#94e1c2,#9ae5c3,#a1e9c4,#a7edc5,#adf1c7,#b2f4c8,#b7f7c9,#bef9cb,#c4fbcc,#cafccc,#cdfccb,#cefbc8,#cffac2,#cff8bc,#cff4b6,#cef1b0,#ccecaa,#cae7a3,#c7e39d,#c7df96,#c8dc90,#c9d889,#cbd582,#ccd27c,#cbce75,#caca6f,#c9c668,#c8c261,#c7be5b,#c6ba54,#c5b64d,#c4b247,#c3ae40,#c2aa39,#c1a632,#c0a22c,#bf9e25,#be9a1e,#be9618,#bd9211,#bc8e0a,#bb8a04,#bb8700,#bc8600)"></i>
<i style="left:84px;top:341px;width:378px;height:3px;background:linear-gradient(90deg,#0a89a6,#0f8ca7,#1690a8,#1d95aa,#2499ac,#2b9dad,#32a2af,#39a6b1,#40abb2,#47afb4,#4fb3b6,#56b8b7,#5dbcb9,#64c0bb,#6bc5bc,#72c9be,#79cdc0,#80d2c1,#86d6c2,#8ddbc3,#94dfc4,#9ae3c5,#a1e8c6,#a7ecc7,#adf0c8,#b3f3ca,#b8f6cb,#bdf9cc,#c5face,#cafcce,#cefdce,#d0fccb,#d1fac6,#d1f8bf,#d1f5b9,#d0f1b3,#ceedad,#cce8a7,#c9e4a0,#cae09a,#cbdd93,#ccd98d,#cdd686,#cdd27f,#cccf79,#cbcb72,#cac76b,#c9c365,#c8bf5e,#c7bb57,#c6b751,#c5b34a,#c5af43,#c4ab3d,#c3a736,#c2a32f,#c19f29,#c09b22,#c0971b,#bf9215,#be8e0e,#bd8a07,#bc8601,#bd8500)"></i>
<i style="left:84px;top:344px;width:384px;height:3px;background:linear-gradient(90deg,#0a87a7,#0e8aa8,#158fa9,#1c93ab,#2397ad,#2b9cae,#32a0b0,#39a5b2,#40a9b4,#47adb5,#4eb2b7,#55b6b9,#5cbaba,#63bfbc,#6ac3be,#71c7bf,#78ccc1,#7fd0c3,#86d4c4,#8dd9c5,#94ddc6,#9ae2c7,#a1e6c8,#a7eac9,#aeefca,#b3f2cb,#b9f5cc,#bef8ce,#c5facf,#cbfbd0,#cffdd0,#d1fcce,#d2fbc9,#d3f9c3,#d3f6bd,#d2f2b7,#d0eeb1,#cee9aa,#cbe4a4,#cce19d,#cdde97,#ceda90,#cfd789,#cfd383,#cecf7c,#cdcb75,#ccc76f,#cbc468,#cac061,#c9bc5b,#c8b854,#c7b44d,#c6b047,#c6ac40,#c5a839,#c4a333,#c39f2c,#c29b25,#c1971f,#c19318,#c08f11,#bf8b0b,#be8704,#be8400,#bf8300)"></i>
<i style="left:85px;top:347px;width:384px;height:3px;background:linear-gradient(90deg,#0a86a8,#0f89a9,#168eab,#1d92ad,#2496ae,#2b9bb0,#329fb2,#39a4b3,#41a8b5,#48acb7,#4fb1b8,#56b5ba,#5db9bc,#64bebd,#6bc2bf,#72c7c1,#79cbc2,#80cfc4,#87d3c6,#8ed8c7,#95dcc8,#9be1c9,#a2e5ca,#a9eacb,#afeecc,#b5f1cd,#baf5ce,#bff8d0,#c6fad1,#ccfbd2,#d1fdd2,#d3fcd0,#d4fbcc,#d5f9c5,#d5f6bf,#d4f2b9,#d2eeb3,#cfe9ad,#cde5a6,#cee1a0,#cfde99,#d1db92,#d2d78c,#d1d385,#d0cf7e,#cfcc78,#cec871,#cdc46a,#ccc064,#cbbc5d,#cab856,#c9b450,#c8b049,#c7ac42,#c6a83c,#c6a335,#c59f2e,#c49b28,#c39721,#c2931a,#c18f14,#c18b0d,#c08706,#bf8300,#c08200)"></i>
<i style="left:85px;top:350px;width:390px;height:3px;background:linear-gradient(90deg,#0a85aa,#0e88aa,#158cac,#1c90ae,#2495af,#2b99b1,#329eb3,#39a2b4,#40a6b6,#47abb8,#4eafba,#55b4bb,#5db8bd,#64bcbf,#6bc1c0,#72c5c2,#79c9c4,#80cec5,#87d2c7,#8ed6c9,#94dbca,#9bdfcb,#a2e4cc,#a9e8cc,#afeccd,#b5f0ce,#bbf4d0,#c0f7d1,#c6fad2,#cdfbd4,#d2fcd4,#d5fdd3,#d6fbcf,#d7fac9,#d7f7c3,#d6f3bd,#d4efb7,#d1eab0,#d0e6aa,#d1e2a3,#d2df9c,#d3dc96,#d3d88f,#d3d488,#d2d082,#d1cc7b,#d0c874,#cfc46e,#cdc167,#ccbd60,#ccb95a,#cbb453,#cab04c,#c9ac46,#c8a83f,#c7a438,#c7a032,#c69c2b,#c59824,#c4941e,#c39017,#c28c10,#c2880a,#c18403,#c18100,#c28000)"></i>
<i style="left:86px;top:353px;width:390px;height:3px;background:linear-gradient(90deg,#0a83ab,#0f87ac,#168bad,#1d8faf,#2494b1,#2b98b2,#339db4,#3aa1b6,#41a5b8,#48aab9,#4faebb,#56b3bd,#5db7be,#64bbc0,#6bc0c2,#72c4c3,#7ac8c5,#81cdc7,#88d1c8,#8fd5ca,#95dacb,#9cdecc,#a3e3cd,#aae7ce,#b0ebcf,#b7f0d0,#bcf3d2,#c2f6d3,#c7f9d4,#cefbd6,#d3fcd6,#d7fdd5,#d8fcd1,#d8facb,#d8f7c5,#d8f3bf,#d6efb9,#d3eab3,#d2e6ac,#d3e3a5,#d4df9f,#d5dc98,#d5d891,#d4d48b,#d3d084,#d2cc7d,#d1c877,#d0c570,#cfc169,#cebd63,#cdb95c,#cdb455,#ccb04f,#cbac48,#caa841,#c9a43b,#c8a034,#c89c2d,#c79827,#c69420,#c59019,#c48c13,#c3880c,#c38305,#c28000,#c37f00)"></i>
<i style="left:86px;top:356px;width:396px;height:3px;background:linear-gradient(90deg,#0a82ac,#0e85ad,#1589af,#1d8eb0,#2492b2,#2b97b4,#329bb5,#399fb7,#40a4b9,#47a8ba,#4fadbc,#56b1be,#5db5c0,#64bac1,#6bbec3,#72c2c5,#79c7c6,#80cbc8,#87cfca,#8ed4cb,#95d8cd,#9cdcce,#a3e1cf,#a9e5d0,#b0ead1,#b7eed2,#bdf2d3,#c2f5d5,#c8f8d6,#cefbd7,#d4fcd8,#d8fdd8,#dafcd5,#dafacf,#daf8c8,#daf4c3,#d8f0bc,#d5ebb6,#d4e7af,#d5e3a9,#d7e0a2,#d8dd9c,#d7d995,#d6d58e,#d5d188,#d4cd81,#d3c97a,#d2c574,#d1c16d,#d0bd66,#cfb960,#ceb559,#ceb152,#cdad4c,#cca945,#cba53e,#caa138,#c99d31,#c9992a,#c89424,#c7901d,#c68c16,#c58810,#c48409,#c48002,#c47e00,#c57d00)"></i>
<i style="left:87px;top:359px;width:396px;height:3px;background:linear-gradient(90deg,#0a81ad,#0f84ae,#1688b0,#1d8db2,#2491b3,#2c96b5,#339ab7,#3a9eb8,#41a3ba,#48a7bc,#4facbe,#56b0bf,#5eb4c1,#65b9c3,#6cbdc4,#73c2c6,#7ac6c8,#81cac9,#88cfcb,#8fd3cd,#96d7ce,#9ddcd0,#a4e0d1,#abe4d2,#b1e9d3,#b8edd4,#bef1d5,#c4f5d6,#c9f8d8,#cffbd9,#d6fcda,#dafdda,#dcfcd7,#dcfbd1,#dcf8cb,#dbf4c5,#d9f0bf,#d7ebb8,#d7e7b2,#d8e4ab,#d9e1a5,#d9dd9e,#d8d997,#d7d591,#d6d18a,#d5cd83,#d4c97d,#d3c576,#d3c16f,#d2bd69,#d1b962,#d0b55b,#cfb155,#cead4e,#cea947,#cda541,#cca13a,#cb9d33,#ca992d,#c99426,#c9901f,#c88c19,#c78812,#c7840b,#c68005,#c67d00,#c77c00)"></i>
<i style="left:87px;top:362px;width:396px;height:3px;background:linear-gradient(90deg,#0a7faf,#0e82af,#1687b1,#1d8bb3,#248fb5,#2b94b6,#3298b8,#399dba,#40a1bb,#48a6bd,#4faabf,#56aec0,#5db3c2,#64b7c4,#6bbcc6,#72c0c7,#79c4c9,#81c9cb,#88cdcc,#8fd1ce,#96d6d0,#9ddad1,#a4ded3,#aae3d4,#b1e7d5,#b8ecd6,#bef0d7,#c4f4d8,#caf7d9,#cffada,#d6fcdc,#dbfddc,#ddfdda,#defbd5,#def9ce,#ddf5c9,#dbf0c2,#d9ecbc,#d9e8b5,#dae5af,#dbe1a8,#dbdea1,#dada9b,#d9d694,#d8d28d,#d7ce87,#d6ca80,#d5c679,#d4c273,#d4be6c,#d3ba65,#d2b65f,#d1b258,#d0ae51,#cfaa4b,#cfa544,#cea13d,#cd9d37,#cc9930,#cb9529,#cb9123,#ca8d1c,#c98915,#c9850f,#c88108,#c87d01,#c87b00)"></i>
<i style="left:88px;top:365px;width:402px;height:3px;background:linear-gradient(90deg,#0a7eb0,#0f81b1,#1686b3,#1d8ab4,#248fb6,#2c93b8,#3397b9,#3a9cbb,#41a0bd,#48a5be,#4fa9c0,#57adc2,#5eb2c4,#65b6c5,#6cbbc7,#73bfc9,#7ac3ca,#81c8cc,#88ccce,#8fd0cf,#96d5d1,#9dd9d3,#a4ddd4,#abe2d6,#b2e6d7,#b9ebd8,#bfefd9,#c6f3da,#cbf7db,#d1fadc,#d7fcde,#ddfdde,#dffddd,#e0fbd7,#e0f9d1,#dff5cb,#ddf0c5,#dbecbe,#dce8b8,#dde5b1,#dee2aa,#dddea4,#dcda9d,#dbd696,#dad290,#d9ce89,#d8ca82,#d7c67c,#d6c275,#d5be6e,#d5ba68,#d4b661,#d3b25a,#d2ae54,#d1aa4d,#d0a546,#d0a140,#cf9d39,#ce9932,#cd952c,#cd9125,#cc8d1e,#cb8918,#cb8511,#ca810a,#ca7d04,#ca7a00,#cb7900)"></i>
<i style="left:88px;top:368px;width:402px;height:3px;background:linear-gradient(90deg,#0a7db1,#0f80b2,#1684b4,#1d89b5,#248db7,#2b91b9,#3296bb,#399abc,#419fbe,#48a3c0,#4fa7c1,#56acc3,#5db0c5,#64b5c6,#6bb9c8,#73bdca,#7ac2cc,#81c6cd,#88cbcf,#8fcfd1,#96d3d2,#9dd8d4,#a4dcd6,#abe0d7,#b2e5d8,#b9e9d9,#bfedda,#c6f2db,#ccf6dd,#d1f9de,#d7fbdf,#ddfde0,#e1fddf,#e2fcdb,#e2fad4,#e1f6ce,#dff1c8,#ddedc2,#dee9bb,#dfe6b4,#e0e3ae,#dfdfa7,#dedba0,#ddd79a,#dcd393,#dbcf8c,#dacb86,#d9c77f,#d8c378,#d7bf72,#d6bb6b,#d6b664,#d5b25e,#d4ae57,#d3aa50,#d2a64a,#d1a243,#d19e3c,#d09a36,#cf962f,#cf9228,#ce8e22,#ce891b,#cd8514,#cd810e,#cc7d07,#cb7900,#cc7800)"></i>
<i style="left:89px;top:371px;width:408px;height:3px;background:linear-gradient(90deg,#0b7cb2,#107fb3,#1783b5,#1e88b7,#258cb8,#2c90ba,#3395bc,#3a99be,#419ebf,#48a2c1,#50a6c3,#57abc4,#5eafc6,#65b4c8,#6cb8ca,#73bccb,#7ac1cd,#82c5cf,#89cad0,#90ced2,#97d2d4,#9ed7d5,#a5dbd7,#acdfd9,#b3e4da,#bae8db,#c0eddc,#c7f1dd,#cdf5de,#d3f8e0,#d8fbe1,#dffde2,#e3fde2,#e4fcdd,#e4fad7,#e3f6d1,#e0f1cb,#dfedc4,#e0eabd,#e2e6b7,#e1e3b0,#e0dfa9,#dfdba3,#ded79c,#ddd395,#dccf8f,#dbcb88,#dbc781,#dac37b,#d9bf74,#d8bb6d,#d7b667,#d6b260,#d6ae59,#d5aa53,#d4a64c,#d3a245,#d39e3f,#d29a38,#d29631,#d1922b,#d08e24,#d0891d,#cf8517,#cf8110,#ce7d09,#cd7903,#ce7700,#ce7600)"></i>
<i style="left:89px;top:374px;width:408px;height:3px;background:linear-gradient(90deg,#0b7ab3,#0f7db4,#1682b6,#1d86b8,#248ab9,#2b8fbb,#3393bd,#3a98bf,#419cc0,#48a0c2,#4fa5c4,#56a9c6,#5daec7,#64b2c9,#6cb6cb,#73bbcc,#7abfce,#81c4d0,#88c8d2,#8fccd3,#96d1d5,#9dd5d7,#a5d9d8,#acdeda,#b3e2dc,#b9e6dd,#c0ebde,#c7efdf,#cdf4e0,#d3f7e1,#d9fae3,#dffce4,#e4fee4,#e5fde1,#e6fbda,#e5f7d4,#e3f2ce,#e2eec7,#e3ebc1,#e4e7ba,#e3e3b4,#e2e0ad,#e1dca6,#e0d8a0,#dfd499,#ded092,#ddcc8c,#dcc785,#dcc37e,#dbbf78,#dabb71,#d9b76a,#d8b364,#d7af5d,#d7ab56,#d6a750,#d5a349,#d59f42,#d49a3c,#d49635,#d3922e,#d38e27,#d28a21,#d1861a,#d18213,#d07e0d,#d07a06,#cf7600,#d07500)"></i>
<i style="left:90px;top:377px;width:408px;height:3px;background:linear-gradient(90deg,#0b79b4,#107cb5,#1781b7,#1e85b9,#258abb,#2c8ebd,#3392be,#3a97c0,#429bc2,#499fc4,#50a4c5,#57a8c7,#5eadc9,#65b1ca,#6cb5cc,#73bace,#7bbed0,#82c3d1,#89c7d3,#90cbd5,#97d0d6,#9ed4d8,#a5d9da,#acdddb,#b3e1dd,#bae5df,#c1eae0,#c8eee1,#cff3e2,#d5f7e3,#dafae4,#e0fce6,#e6fee6,#e7fde3,#e8fbdd,#e7f7d7,#e4f2d0,#e4eeca,#e5ebc3,#e6e7bd,#e5e4b6,#e4e0af,#e3dca9,#e2d8a2,#e1d49b,#e0d095,#dfcc8e,#dec787,#ddc381,#ddbf7a,#dcbb73,#dbb76d,#dab366,#d9af5f,#d9ab59,#d8a752,#d8a34b,#d79f44,#d69a3e,#d69637,#d59230,#d58e2a,#d48a23,#d3861c,#d38216,#d27e0f,#d27a08,#d17502,#d17400)"></i>
<i style="left:90px;top:380px;width:414px;height:3px;background:linear-gradient(90deg,#0b78b6,#0f7bb6,#177fb8,#1e84ba,#2588bc,#2c8cbe,#3391bf,#3a95c1,#4199c3,#489ec5,#4fa2c6,#56a7c8,#5dabca,#65afcc,#6cb4cd,#73b8cf,#7abdd1,#81c1d2,#88c5d4,#90cad6,#97ced8,#9ed3d9,#a5d7db,#acdbdd,#b3e0de,#bae4e0,#c1e8e2,#c8ede3,#cff1e4,#d5f5e5,#dbf9e6,#e0fce7,#e7fee8,#e9fde6,#eafbe0,#e9f8da,#e6f3d4,#e6efcd,#e8ecc7,#e7e8c0,#e6e4b9,#e5e0b3,#e4dcac,#e3d8a5,#e3d49f,#e2d098,#e1cc91,#e0c88b,#dfc484,#dec07d,#debc77,#ddb870,#dcb469,#dcb063,#dbab5c,#daa755,#daa34f,#d99f48,#d99b41,#d8973b,#d79334,#d78f2d,#d68b27,#d68720,#d58219,#d57e13,#d47a0c,#d37605,#d37300,#d47200)"></i>
<i style="left:91px;top:383px;width:414px;height:3px;background:linear-gradient(90deg,#0b77b7,#107ab8,#177eba,#1e83bb,#2687bd,#2d8bbf,#3490c1,#3b94c2,#4299c4,#499dc6,#50a1c8,#57a6c9,#5eaacb,#65aecd,#6cb3cf,#74b7d0,#7bbcd2,#82c0d4,#89c4d6,#90c9d7,#97cdd9,#9ed2db,#a6d6dc,#addade,#b4dfe0,#bbe3e1,#c2e7e3,#c9ece5,#d0f0e6,#d6f5e7,#dcf9e8,#e2fce9,#e8fdea,#ebfde9,#ebfce3,#eaf8dd,#e8f3d6,#e9f0d0,#eaecc9,#e9e8c2,#e8e4bc,#e7e1b5,#e6ddae,#e5d8a8,#e4d4a1,#e3d09a,#e3cc94,#e2c88d,#e1c486,#e0c080,#dfbc79,#dfb872,#deb46c,#deb065,#ddab5e,#dca758,#dca351,#db9f4a,#db9b44,#da973d,#da9336,#d98f30,#d88b29,#d88622,#d7821c,#d77e15,#d67a0e,#d57608,#d57201,#d57100)"></i>
<i style="left:91px;top:386px;width:420px;height:3px;background:linear-gradient(90deg,#0c75b8,#1078b9,#177dbb,#1e81bc,#2585be,#2c8ac0,#338ec2,#3a93c3,#4197c5,#499bc7,#50a0c9,#57a4ca,#5ea8cc,#65adce,#6cb1d0,#73b6d2,#7abad3,#81bed5,#88c3d7,#90c7d8,#97ccda,#9ed0dc,#a5d4de,#acd9df,#b3dde1,#bae1e3,#c1e6e4,#c8eae6,#cfefe7,#d6f3e8,#ddf7e9,#e2fbeb,#e8fdec,#edfeec,#edfce6,#ecf9e0,#eaf4da,#ebf1d3,#ecedcc,#ebe9c6,#eae5bf,#e9e1b8,#e8ddb2,#e7d9ab,#e6d5a4,#e5d19e,#e4cd97,#e4c990,#e3c58a,#e2c183,#e2bd7c,#e1b876,#e0b46f,#e0b068,#dfac62,#dfa85b,#dea454,#dea04e,#dd9c47,#dc9840,#dc933a,#db8f33,#db8b2c,#da8726,#d9831f,#d97f18,#d87b12,#d8770b,#d77304,#d77000,#d77000)"></i>
<i style="left:92px;top:389px;width:420px;height:3px;background:linear-gradient(90deg,#0c74b9,#1077ba,#187cbc,#1f80be,#2684bf,#2d89c1,#348dc3,#3b92c5,#4296c7,#499ac8,#509fca,#58a3cc,#5fa8ce,#66accf,#6db0d1,#74b5d3,#7bb9d5,#82bdd6,#89c2d8,#90c6da,#97cbdc,#9fcfdd,#a6d3df,#add8e1,#b4dce2,#bbe1e4,#c2e5e6,#c9e9e7,#d0eee9,#d7f2ea,#def6eb,#e4faec,#eafdee,#eefeee,#effce8,#eef9e2,#edf4dc,#eef1d5,#ededcf,#ece9c8,#ebe5c1,#eae1bb,#eaddb4,#e9d9ad,#e8d5a7,#e7d1a0,#e6cd99,#e5c993,#e5c58c,#e4c185,#e4bc7f,#e3b878,#e3b471,#e2b06b,#e1ac64,#e1a85d,#e0a457,#e0a050,#df9c49,#de9843,#de933c,#dd8f35,#dd8b2f,#dc8728,#dc8321,#db7f1b,#da7b14,#da770d,#d97307,#d96f00,#d96e00)"></i>
<i style="left:92px;top:392px;width:426px;height:3px;background:linear-gradient(90deg,#0c73ba,#1076bb,#177abd,#1e7ebf,#2583c0,#2c87c2,#348cc4,#3b90c6,#4294c8,#4999c9,#509dcb,#57a2cd,#5ea6cf,#65aad0,#6cafd2,#73b3d4,#7bb7d6,#82bcd7,#89c0d9,#90c5db,#97c9dd,#9ecdde,#a5d2e0,#acd6e2,#b4dbe4,#bbdfe5,#c2e3e7,#c9e8e9,#d0ecea,#d7f0ec,#def5ed,#e4f9ee,#eafcef,#f0fef0,#f1fdec,#f0f9e6,#eff5df,#f0f2d9,#efeed2,#eeeacb,#ede6c5,#ece2be,#ebdeb7,#ebdab1,#ead6aa,#e9d2a3,#e8ce9d,#e8c996,#e7c58f,#e7c189,#e6bd82,#e5b97b,#e5b575,#e4b16e,#e4ad67,#e3a961,#e2a45a,#e2a053,#e19c4d,#e19846,#e0943f,#df9039,#df8c32,#de882b,#de8425,#dd801e,#dc7c17,#dc7711,#db730a,#da6f03,#da6d00,#db6d00)"></i>
<i style="left:93px;top:395px;width:426px;height:3px;background:linear-gradient(90deg,#0c72bb,#1175bc,#1879be,#1f7dc0,#2682c2,#2d86c4,#348bc5,#3b8fc7,#4393c9,#4a98cb,#519ccc,#58a1ce,#5fa5d0,#66a9d2,#6daed3,#74b2d5,#7bb7d7,#82bbd9,#8abfdb,#91c4dc,#98c8de,#9fcce0,#a6d1e2,#add5e3,#b4dae5,#bbdee7,#c2e2e8,#cae7ea,#d1ebec,#d8efed,#dff4ef,#e5f8f0,#ebfcf1,#f1fef2,#f3fdee,#f2f9e8,#f1f6e2,#f2f2db,#f1eed4,#f0eace,#efe6c7,#eee2c0,#eddeba,#ecdab3,#ecd6ac,#ebd2a6,#eacd9f,#eac998,#e9c592,#e9c18b,#e8bd84,#e7b97e,#e7b577,#e6b170,#e6ad6a,#e5a963,#e5a45c,#e4a056,#e39c4f,#e39848,#e29442,#e2903b,#e18c34,#e0882e,#e08427,#df8020,#de7c1a,#de7813,#dd740c,#dc6f06,#dc6c00,#dc6c00)"></i>
<i style="left:93px;top:398px;width:432px;height:3px;background:linear-gradient(90deg,#0c71bd,#1073bd,#1777bf,#1e7cc1,#2680c3,#2d85c5,#3489c6,#3b8dc8,#4292ca,#4996cc,#509bcd,#579fcf,#5ea3d1,#66a8d3,#6dacd4,#74b0d6,#7bb5d8,#82b9da,#89bedc,#90c2dd,#97c6df,#9ecbe1,#a5cfe3,#add4e4,#b4d8e6,#bbdce8,#c2e1ea,#c9e5eb,#d0eaed,#d7eeef,#def2f0,#e5f7f2,#ecfbf3,#f2fef4,#f5fef2,#f4faec,#f4f6e5,#f3f3df,#f2efd8,#f1ebd1,#f1e7cb,#f0e3c4,#efdfbd,#eedab7,#eed6b0,#edd2a9,#edcea3,#ecca9c,#ebc695,#ebc28f,#eabe88,#eaba81,#e9b57b,#e8b174,#e8ad6d,#e7a967,#e7a560,#e6a159,#e59d53,#e5994c,#e49545,#e3913f,#e38d38,#e28931,#e2852a,#e18124,#e07c1d,#e07816,#df7410,#de7009,#de6c02,#de6b00,#de6a00)"></i>
<i style="left:94px;top:401px;width:432px;height:3px;background:linear-gradient(90deg,#0d6fbe,#1172bf,#1876c1,#1f7bc2,#267fc4,#2d84c6,#3588c8,#3c8cc9,#4391cb,#4a95cd,#519acf,#589ed0,#5fa2d2,#66a7d4,#6dabd6,#75b0d8,#7cb4d9,#83b8db,#8abddd,#91c1df,#98c6e0,#9fcae2,#a6cee4,#add3e6,#b4d7e7,#bcdbe9,#c3e0eb,#cae4ed,#d1e9ee,#d8edf0,#dff1f2,#e6f6f3,#edfaf5,#f3fef6,#f7fef4,#f5faee,#f6f7e8,#f5f3e1,#f4efda,#f3ebd4,#f2e7cd,#f2e3c6,#f1dec0,#f0dab9,#f0d6b2,#efd2ac,#efcea5,#eeca9e,#eec698,#edc291,#ecbe8a,#ecba84,#ebb57d,#ebb176,#eaad70,#e9a969,#e9a562,#e8a15c,#e79d55,#e7994e,#e69547,#e59141,#e58d3a,#e48933,#e3852d,#e38126,#e27d1f,#e17919,#e17412,#e0700b,#e06c05,#df6900,#df6900)"></i>
<i style="left:95px;top:404px;width:432px;height:3px;background:linear-gradient(90deg,#0d6ebf,#1271c0,#1976c2,#207ac4,#277ec5,#2e83c7,#3587c9,#3c8ccb,#4390cc,#4b94ce,#5299d0,#599dd2,#60a1d4,#67a6d5,#6eaad7,#75afd9,#7cb3db,#83b7dc,#8bbcde,#92c0e0,#99c5e2,#a0c9e3,#a7cde5,#aed2e7,#b5d6e9,#bcdbeb,#c3dfec,#cae3ee,#d2e8f0,#d9ecf2,#e0f0f3,#e7f5f5,#eef9f6,#f4fdf8,#f8fef7,#f8fbf1,#f8f7ea,#f7f3e3,#f6efdd,#f5ebd6,#f4e7cf,#f4e3c9,#f3dec2,#f3dabb,#f2d6b5,#f1d2ae,#f1cea7,#f0caa1,#f0c69a,#efc293,#eebe8d,#eeba86,#edb67f,#ecb279,#ecad72,#eba96b,#eaa565,#eaa15e,#e99d57,#e89950,#e8954a,#e79143,#e78d3c,#e68936,#e5852f,#e58128,#e47d22,#e3791b,#e37514,#e2710e,#e16c07,#e16800,#e16800)"></i>
<i style="left:95px;top:407px;width:438px;height:3px;background:linear-gradient(90deg,#0d6dc0,#116fc1,#1874c3,#1f78c5,#267dc6,#2e81c8,#3585ca,#3c8acc,#438ecd,#4a93cf,#5197d1,#589bd3,#5fa0d5,#67a4d6,#6ea9d8,#75adda,#7cb1dc,#83b6dd,#8abadf,#91bfe1,#98c3e3,#9fc7e4,#a7cce6,#aed0e8,#b5d4ea,#bcd9ec,#c3dded,#cae2ef,#d1e6f1,#d8eaf3,#dfeff4,#e7f3f6,#eef8f8,#f5fcf9,#fafffa,#fafbf4,#f9f8ed,#f8f4e7,#f8f0e0,#f7ebd9,#f6e7d3,#f6e3cc,#f5dfc5,#f5dbbf,#f4d7b8,#f4d3b1,#f3cfab,#f2cba4,#f2c79d,#f1c397,#f0bf90,#f0ba89,#efb683,#eeb27c,#eeae75,#edaa6f,#eca668,#eca261,#eb9e5b,#ea9a54,#ea964d,#e99247,#e98e40,#e88a39,#e78633,#e7822c,#e67e25,#e5791f,#e57518,#e47111,#e36d0b,#e36904,#e26700,#e26700)"></i>
<i style="left:96px;top:410px;width:438px;height:3px;background:linear-gradient(90deg,#0d6cc1,#126ec2,#1973c4,#2077c6,#277cc8,#2e80c9,#3584cb,#3d89cd,#448dcf,#4b92d1,#5296d2,#599ad4,#609fd6,#67a3d8,#6ea8d9,#75acdb,#7db0dd,#84b5df,#8bb9e0,#92bee2,#99c2e4,#a0c6e6,#a7cbe8,#aecfe9,#b5d4eb,#bdd8ed,#c4dcef,#cbe1f0,#d2e5f2,#d9eaf4,#e0eef6,#e7f2f7,#eef7f9,#f5fbfb,#fcfffc,#fcfcf6,#fbf8f0,#faf4e9,#faefe2,#f9ebdc,#f9e7d5,#f8e3ce,#f7dfc8,#f7dbc1,#f6d7ba,#f5d3b4,#f5cfad,#f4cba6,#f3c7a0,#f3c399,#f2bf92,#f1bb8c,#f1b785,#f0b27e,#f0ae78,#efaa71,#eea66a,#eea264,#ed9e5d,#ec9a56,#ec9650,#eb9249,#ea8e42,#ea8a3c,#e98635,#e8822e,#e87e28,#e77a21,#e6761a,#e67114,#e56d0d,#e56906,#e46600,#e46500)"></i>
<i style="left:96px;top:413px;width:444px;height:3px;background:linear-gradient(90deg,#0d6ac2,#116dc3,#1871c5,#2076c7,#277ac9,#2e7eca,#3583cc,#3c87ce,#438cd0,#4a90d2,#5194d3,#5899d5,#609dd7,#67a2d9,#6ea6da,#75aadc,#7cafde,#83b3e0,#8ab8e1,#91bce3,#98c0e5,#a0c5e7,#a7c9e9,#aecdea,#b5d2ec,#bcd6ee,#c3dbf0,#cadff1,#d1e3f3,#d9e8f5,#e0ecf7,#e7f1f8,#eef5fa,#f5f9fc,#fcfefe,#fefcfa,#fdf8f3,#fcf4ec,#fcf0e6,#fbecdf,#fbe8d8,#fae4d2,#f9e0cb,#f9dcc4,#f8d8be,#f7d4b7,#f7d0b0,#f6ccaa,#f5c8a3,#f5c49c,#f4bf96,#f3bb8f,#f3b788,#f2b382,#f2af7b,#f1ab74,#f0a76e,#f0a367,#ef9f60,#ee9b5a,#ee9753,#ed934c,#ec8f46,#ec8b3f,#eb8738,#ea8332,#ea7e2b,#e97a24,#e8761e,#e87217,#e76e10,#e76a0a,#e66603,#e66400,#e66400)"></i>
<i style="left:97px;top:416px;width:444px;height:3px;background:linear-gradient(90deg,#0d69c4,#126cc5,#1970c6,#2075c8,#2779ca,#2e7dcc,#3682ce,#3d86cf,#448bd1,#4b8fd3,#5293d5,#5998d6,#609cd8,#67a1da,#6ea5dc,#76a9dd,#7daedf,#84b2e1,#8bb7e3,#92bbe5,#99bfe6,#a0c4e8,#a7c8ea,#aecdec,#b6d1ed,#bdd5ef,#c4daf1,#cbdef3,#d2e2f4,#d9e7f6,#e0ebf8,#e7f0fa,#eff4fc,#f6f8fd,#fdfdff,#fefbfb,#fff8f5,#fef4ef,#fef0e8,#fdece1,#fce8db,#fce4d4,#fbe0cd,#fadcc7,#fad8c0,#f9d4b9,#f9d0b3,#f8ccac,#f7c8a5,#f7c49f,#f6c098,#f5bc91,#f5b78b,#f4b384,#f3af7d,#f3ab77,#f2a770,#f1a369,#f19f63,#f09b5c,#ef9755,#ef934f,#ee8f48,#ee8b41,#ed873b,#ec8334,#ec7f2d,#eb7b27,#ea7620,#ea7219,#e96e13,#e86a0c,#e86605,#e76300,#e76300)"></i>
<i style="left:98px;top:419px;width:444px;height:3px;background:linear-gradient(90deg,#0e68c5,#136bc6,#1a6fc8,#2174c9,#2878cb,#2f7ccd,#3681cf,#3d85d1,#448ad2,#4c8ed4,#5392d6,#5a97d8,#619bd9,#68a0db,#6fa4dd,#76a8df,#7dade1,#84b1e2,#8cb6e4,#93bae6,#9abee8,#a1c3e9,#a8c7eb,#afcced,#b6d0ef,#bdd4f0,#c4d9f2,#ccddf4,#d3e1f6,#dae6f7,#e1eaf9,#e8eefb,#eff3fd,#f6f7fe,#fbf9fe,#fcf6f8,#fdf4f3,#fdf2ee,#feefe9,#ffece4,#fee8dd,#fee4d6,#fde0d0,#fcdcc9,#fcd8c2,#fbd4bc,#fad0b5,#faccae,#f9c8a8,#f8c4a1,#f8c09a,#f7bc94,#f6b88d,#f6b486,#f5af80,#f5ab79,#f4a772,#f3a36c,#f39f65,#f29b5e,#f19758,#f19351,#f08f4a,#ef8b44,#ef873d,#ee8336,#ed7f30,#ed7b29,#ec7722,#ec731c,#eb6e15,#ea6a0e,#ea6608,#e96201,#e96200)"></i>
<i style="left:98px;top:422px;width:450px;height:3px;background:linear-gradient(90deg,#0e67c6,#1269c7,#196ec9,#2072ca,#2776cc,#2f7bce,#367fd0,#3d84d2,#4488d3,#4b8cd5,#5291d7,#5995d9,#6099da,#679edc,#6fa2de,#76a7e0,#7dabe2,#84afe3,#8bb4e5,#92b8e7,#99bde9,#a0c1ea,#a7c5ec,#afcaee,#b6cef0,#bdd3f1,#c4d7f3,#cbdbf5,#d2e0f7,#d9e4f8,#e1e8fa,#e8ecfc,#eff1fd,#f5f5ff,#f9f5fc,#f9f2f7,#faf0f2,#fbeded,#fcebe8,#fde9e3,#fde6de,#fee4d8,#ffe1d3,#feddcd,#fed9c6,#fdd5bf,#fcd1b9,#fccdb2,#fbc9ab,#fac5a5,#fac09e,#f9bc97,#f8b890,#f8b48a,#f7b083,#f7ac7c,#f6a876,#f5a46f,#f5a068,#f49c62,#f3985b,#f39454,#f2904e,#f18c47,#f18840,#f0843a,#ef8033,#ef7b2c,#ee7726,#ed731f,#ed6f18,#ec6b12,#ec670b,#eb6304,#ea6000,#ea6000)"></i>
<i style="left:99px;top:425px;width:450px;height:3px;background:linear-gradient(90deg,#0e65c7,#1368c8,#1a6dca,#2171cc,#2875ce,#2f7acf,#367ed1,#3d83d3,#4487d5,#4c8bd6,#5390d8,#5a94da,#6198dc,#689ddd,#6fa1df,#76a6e1,#7daae3,#85aee5,#8cb3e6,#93b7e8,#9abcea,#a1c0ec,#a8c4ed,#afc9ef,#b6cdf1,#bed1f2,#c5d6f4,#ccdaf6,#d3def8,#dae2f9,#e1e7fb,#e8ebfd,#efeffe,#f5f3ff,#f6f0fa,#f7eef5,#f8ebf0,#f9e9eb,#fae6e6,#fae4e1,#fbe2db,#fcdfd6,#fdddd1,#fedacc,#fed8c7,#ffd5c1,#fed1bb,#fecdb4,#fdc9ad,#fcc5a7,#fcc1a0,#fbbd99,#fab893,#fab48c,#f9b085,#f8ac7f,#f8a878,#f7a471,#f6a06b,#f69c64,#f5985d,#f49457,#f49050,#f38c49,#f38843,#f2843c,#f18035,#f17c2f,#f07728,#ef7321,#ef6f1b,#ee6b14,#ed670d,#ed6307,#ec5f00,#ec5f00)"></i>
<i style="left:99px;top:428px;width:456px;height:3px;background:linear-gradient(90deg,#0e64c8,#1266c9,#196bcb,#206fcd,#2774cf,#2f78d0,#367cd2,#3d81d4,#4485d6,#4b8ad7,#528ed9,#5992db,#6097dd,#679bde,#6fa0e0,#76a4e2,#7da8e4,#84ade6,#8bb1e7,#92b5e9,#99baeb,#a1beec,#a8c2ee,#afc7f0,#b6cbf1,#bdcff3,#c4d4f5,#cbd8f7,#d2dcf8,#dae0fa,#e1e5fc,#e7e9fd,#eeedfe,#f3effe,#f4ecf9,#f5eaf4,#f5e7ef,#f6e5ea,#f7e2e4,#f8e0df,#f9deda,#fadbd5,#fad9d0,#fbd6cb,#fcd4c6,#fdd1c1,#fecfbc,#feccb6,#ffcab1,#fec5aa,#fec1a4,#fdbd9d,#fcb996,#fcb590,#fbb189,#faad82,#faa97c,#f9a575,#f8a16e,#f89d68,#f79961,#f6955a,#f69154,#f58d4d,#f48946,#f48440,#f38039,#f37c32,#f2782c,#f17425,#f1701e,#f06c18,#ef6811,#ef640a,#ee6004,#ee5e00,#ed5e00)"></i>
<i style="left:100px;top:431px;width:456px;height:3px;background:linear-gradient(90deg,#0e63c9,#1365cb,#1a6acc,#216ece,#2873d0,#2f77d2,#367bd3,#3d80d5,#4584d7,#4c89d9,#538dda,#5a91dc,#6196de,#689ae0,#6f9ee1,#76a3e3,#7ea7e5,#85abe7,#8cb0e8,#93b4ea,#9ab8ec,#a1bded,#a8c1ef,#b0c5f1,#b7caf2,#becef4,#c5d2f6,#ccd6f8,#d3dbf9,#dadffb,#e1e3fd,#e8e7fe,#eeebff,#f1eafc,#f2e8f7,#f2e5f2,#f3e3ed,#f4e0e7,#f5dee2,#f6dbdd,#f6d9d8,#f7d7d3,#f8d4ce,#f9d2c9,#facfc4,#facdbf,#fbcab9,#fcc8b4,#fdc5af,#fec3aa,#fec1a5,#ffbd9f,#feb999,#fdb592,#fdb18b,#fcad85,#fca97e,#fba577,#faa171,#fa9d6a,#f99963,#f8955d,#f89156,#f78d4f,#f68949,#f68542,#f5813b,#f47c35,#f4782e,#f37427,#f27021,#f26c1a,#f16813,#f1640d,#f06006,#ef5c00,#ef5d00)"></i>
<i style="left:101px;top:434px;width:456px;height:3px;background:linear-gradient(90deg,#0f62cb,#1364cc,#1a69ce,#226dcf,#2972d1,#3076d3,#377ad5,#3e7fd6,#4583d8,#4c88da,#538cdc,#5b90dd,#6295df,#6999e1,#709de2,#77a1e4,#7ea6e6,#86aae8,#8daee9,#94b3eb,#9bb7ed,#a2bbee,#a9c0f0,#b0c4f2,#b7c8f4,#bfcdf5,#c6d1f7,#cdd5f9,#d4d9fa,#daddfc,#e1e2fd,#e8e6fe,#eee8ff,#eee6fa,#efe3f5,#f0e1f0,#f1deea,#f2dce5,#f2d9e0,#f3d7db,#f4d5d6,#f5d2d1,#f6d0cc,#f6cdc7,#f7cbc1,#f8c8bc,#f9c6b7,#fac3b2,#fbc1ad,#fbbea8,#fcbca3,#fdba9e,#feb799,#ffb593,#ffb18e,#fead87,#fda980,#fda57a,#fca173,#fb9d6c,#fb9966,#fa955f,#f99158,#f98d52,#f8894b,#f88544,#f7813e,#f67d37,#f67930,#f5742a,#f47023,#f46c1c,#f36816,#f2640f,#f26008,#f15c02,#f15b00)"></i>
<i style="left:101px;top:437px;width:462px;height:3px;background:linear-gradient(90deg,#0f60cc,#1363cd,#1a67cf,#216cd0,#2870d2,#2f74d4,#3679d6,#3e7dd7,#4581d9,#4c86db,#538adc,#5a8ede,#6193e0,#6997e2,#709be3,#77a0e5,#7ea4e7,#85a8e8,#8cacea,#93b1ec,#9ab5ed,#a2b9ef,#a9bef1,#b0c2f3,#b7c6f4,#becaf6,#c5cff8,#ccd3f9,#d3d7fb,#dadbfd,#e0e0fe,#e7e3ff,#ebe4fe,#ece2f8,#eddff3,#eeddee,#eedae9,#efd8e4,#f0d5df,#f1d3da,#f2d0d5,#f2ced0,#f3ccca,#f4c9c5,#f5c7c0,#f6c4bb,#f6c2b6,#f7bfb1,#f8bdac,#f9baa7,#fab8a2,#fbb69c,#fbb397,#fcb192,#fdae8d,#feac88,#ffa983,#ffa67d,#fea276,#fd9e70,#fd9a69,#fc9662,#fb925c,#fb8e55,#fa8a4e,#fa8648,#f98141,#f87d3a,#f87934,#f7752d,#f67126,#f66d20,#f56919,#f46512,#f4610c,#f35d05,#f25a00,#f25a00)"></i>
<i style="left:102px;top:440px;width:462px;height:3px;background:linear-gradient(90deg,#0f5fcd,#1362ce,#1b66d0,#226ad1,#296fd3,#3073d5,#3777d7,#3e7cd8,#4680da,#4d84dc,#5489dd,#5b8ddf,#6291e1,#6996e3,#709ae4,#789ee6,#7fa3e8,#86a7e9,#8dabeb,#94afed,#9bb4ee,#a2b8f0,#a9bcf2,#b0c1f4,#b8c5f5,#bfc9f7,#c5cdf9,#ccd1fa,#d3d5fc,#dadafd,#e1defe,#e7e1ff,#e9e0fb,#eaddf6,#eadbf1,#ebd8ec,#ecd6e7,#edd3e2,#eed1dd,#eeced8,#efccd3,#f0cacd,#f1c7c8,#f2c5c3,#f3c2be,#f3c0b9,#f4bdb4,#f5bbaf,#f6b8aa,#f7b6a5,#f7b39f,#f8b19a,#f9af95,#faac90,#fbaa8b,#fba786,#fca581,#fda27c,#fea077,#ff9d71,#ff9a6b,#fe9665,#fd925e,#fd8e57,#fc8a51,#fb864a,#fb8243,#fa7e3d,#f97936,#f9752f,#f87129,#f76d22,#f7691b,#f66515,#f6610e,#f55d07,#f45901,#f45900)"></i>
<i style="left:103px;top:443px;width:468px;height:3px;background:linear-gradient(90deg,#0f5ece,#1460cf,#1b65d1,#2369d3,#2a6dd4,#3172d6,#3876d8,#3f7ad9,#467fdb,#4d83dd,#5587de,#5c8ce0,#6390e2,#6a94e4,#7199e5,#789de7,#7fa1e9,#87a6ea,#8eaaec,#95aeee,#9cb2ef,#a3b7f1,#aabbf3,#b1bff5,#b8c3f6,#bfc8f8,#c6ccfa,#cdd0fb,#d4d4fd,#dad8fe,#e1dcff,#e6defe,#e6dbf9,#e7d9f4,#e8d6ef,#e9d4ea,#ead1e5,#ebcfe0,#ebccdb,#eccad6,#edc7d0,#eec5cb,#efc3c6,#efc0c1,#f0bebc,#f1bbb7,#f2b9b2,#f3b6ad,#f3b4a8,#f4b1a2,#f5af9d,#f6ad98,#f7aa93,#f8a88e,#f8a589,#f9a384,#faa07f,#fb9e79,#fc9b74,#fc996f,#fd966a,#fe9465,#ff9260,#ff8e5a,#fe8a53,#fd864c,#fd8246,#fc7e3f,#fb7a38,#fb7632,#fa712b,#f96d24,#f9691e,#f86517,#f76110,#f75d0a,#f65903,#f65700,#f55800)"></i>
<i style="left:103px;top:446px;width:468px;height:3px;background:linear-gradient(90deg,#105ccf,#145ed0,#1b63d2,#2267d3,#296bd5,#3070d7,#3874d8,#3f78da,#467ddc,#4d81de,#5485df,#5b8ae1,#628ee3,#6a92e4,#7197e6,#789be8,#7f9fe9,#86a3eb,#8da8ed,#94acef,#9bb0f0,#a2b5f2,#a9b9f4,#b0bdf5,#b7c1f7,#bec5f9,#c5c9fa,#cccefc,#d3d2fd,#d9d6fe,#e0d9ff,#e3d9fd,#e4d7f8,#e5d5f3,#e6d2ee,#e6d0e9,#e7cde4,#e8cbde,#e9c8d9,#eac6d4,#ebc3cf,#ebc1ca,#ecbec5,#edbcc0,#eebabb,#efb7b6,#efb5b0,#f0b2ab,#f1b0a6,#f2ada1,#f3ab9c,#f3a897,#f4a692,#f5a48d,#f6a188,#f79f82,#f79c7d,#f89a78,#f99773,#fa956e,#fb9269,#fc9064,#fc8d5f,#fd8b5a,#fe8954,#ff864f,#ff8349,#fe7e42,#fd7a3c,#fd7635,#fc722e,#fb6e28,#fb6a21,#fa661a,#f96214,#f95e0d,#f85a06,#f75600,#f75600)"></i>
<i style="left:104px;top:449px;width:468px;height:3px;background:linear-gradient(90deg,#105bd0,#155dd1,#1c62d3,#2366d4,#2a6ad6,#316ed8,#3873d9,#4077db,#477bdd,#4e80df,#5584e0,#5c88e2,#638de4,#6a91e5,#7195e7,#799ae9,#809eea,#87a2ec,#8ea6ee,#95abf0,#9caff1,#a3b3f3,#aab7f5,#b1bcf6,#b8c0f8,#bfc4fa,#c5c8fb,#ccccfc,#d3d1fd,#d9d4fe,#dfd7ff,#e1d5fb,#e2d2f6,#e3d0f1,#e3ceec,#e4cbe7,#e5c9e1,#e6c6dc,#e7c4d7,#e7c1d2,#e8bfcd,#e9bcc8,#eabac3,#ebb8be,#ebb5b9,#ecb3b3,#edb0ae,#eeaea9,#efaba4,#efa99f,#f0a69a,#f1a495,#f2a290,#f39f8b,#f49d85,#f49a80,#f5987b,#f69576,#f79371,#f8906c,#f88e67,#f98b62,#fa895d,#fb8757,#fc8452,#fc824d,#fd7f48,#fe7d43,#ff7a3e,#fe7637,#fe7231,#fd6e2a,#fd6a23,#fc661d,#fb6216,#fb5e0f,#fa5a09,#f95602,#f95500)"></i>
<i style="left:105px;top:452px;width:474px;height:3px;background:linear-gradient(90deg,#1159d1,#155cd2,#1d60d4,#2465d5,#2b69d7,#326dd9,#3972da,#4076dc,#477ade,#4e7ee0,#5683e1,#5d87e3,#648be5,#6b90e6,#7294e8,#7998ea,#809deb,#87a1ed,#8ea5ef,#95a9f1,#9daef2,#a3b2f4,#aab6f6,#b1baf7,#b8bef9,#bfc2fb,#c6c7fc,#cdcbfd,#d3cffe,#d9d2ff,#ded3fe,#dfd0f9,#dfcef4,#e0ccef,#e1c9ea,#e2c7e4,#e3c4df,#e3c2da,#e4bfd5,#e5bdd0,#e6bacb,#e7b8c6,#e8b6c1,#e8b3bc,#e9b1b6,#eaaeb1,#ebacac,#eca9a7,#eca7a2,#eda49d,#eea298,#ef9f93,#f09d8e,#f09b88,#f19883,#f2967e,#f39379,#f49174,#f48e6f,#f58c6a,#f68965,#f78760,#f8855a,#f98255,#f98050,#fa7d4b,#fb7b46,#fc7841,#fd763c,#fd7337,#fe7132,#ff6e2c,#fe6a26,#fe661f,#fd6218,#fc5e12,#fc5a0b,#fb5604,#fb5400,#fa5400)"></i>
<i style="left:105px;top:455px;width:474px;height:3px;background:linear-gradient(90deg,#1158d2,#155ad3,#1c5ed4,#2363d6,#2a67d8,#326bd9,#396fdb,#4074dd,#4778df,#4e7ce0,#5581e2,#5c85e4,#6389e5,#6a8ee7,#7292e9,#7996eb,#809aec,#879fee,#8ea3f0,#95a7f1,#9cabf3,#a3b0f5,#aab4f6,#b1b8f8,#b7bcfa,#bec0fb,#c5c4fc,#ccc9fd,#d2ccfe,#d8cfff,#dbcffd,#dcccf8,#ddcaf3,#dec7ed,#dfc5e8,#dfc3e3,#e0c0de,#e1bed9,#e2bbd4,#e3b9cf,#e3b6ca,#e4b4c5,#e5b1bf,#e6afba,#e7adb5,#e7aab0,#e8a8ab,#e9a5a6,#eaa3a1,#eba09c,#ec9e96,#ec9b91,#ed998c,#ee9687,#ef9482,#f0927d,#f08f78,#f18d73,#f28a6e,#f38868,#f48563,#f4835e,#f58059,#f67e54,#f77c4f,#f8794a,#f97745,#f97440,#fa723a,#fb6f35,#fc6d30,#fd6a2b,#fd6826,#fe6521,#ff631c,#fe5f15,#fe5b0e,#fd5708,#fc5301,#fc5200)"></i>
<i style="left:106px;top:458px;width:480px;height:3px;background:linear-gradient(90deg,#1156d3,#1659d4,#1d5dd5,#2461d7,#2b66d9,#326adb,#396edc,#4072de,#4877e0,#4f7be1,#567fe3,#5d84e5,#6488e6,#6b8ce8,#7291ea,#7995ec,#8099ed,#879def,#8ea2f1,#95a6f2,#9caaf4,#a3aef6,#aab2f7,#b1b6f9,#b8bafa,#bfbffc,#c5c3fd,#ccc7fe,#d2cafe,#d8ccff,#d9cafb,#dac8f6,#dbc5f0,#dbc3eb,#dcc1e6,#ddbee1,#debcdc,#dfb9d7,#dfb7d2,#e0b4cd,#e1b2c7,#e2afc2,#e3adbd,#e4aab8,#e4a8b3,#e5a6ae,#e6a3a9,#e7a1a4,#e89e9f,#e89c99,#e99994,#ea978f,#eb948a,#ec9285,#ec9080,#ed8d7b,#ee8b76,#ef8871,#f0866b,#f18366,#f18161,#f27e5c,#f37c57,#f47952,#f5774d,#f57548,#f67243,#f7703d,#f86d38,#f96b33,#f9682e,#fa6629,#fb6324,#fc611f,#fd5f1a,#fd5c15,#fe5a0f,#ff570a,#fe5303,#fe5100,#fd5200)"></i>
<i style="left:107px;top:461px;width:480px;height:3px;background:linear-gradient(90deg,#1255d3,#1657d5,#1e5cd6,#2560d8,#2c64da,#3369dc,#3a6ddd,#4171df,#4875e1,#4f7ae2,#577ee4,#5e82e6,#6587e7,#6c8be9,#738feb,#7a93ed,#8198ee,#889cf0,#8fa0f2,#96a4f3,#9da8f5,#a4acf7,#aab1f8,#b1b5fa,#b8b9fb,#bfbdfc,#c5c2fd,#ccc5fe,#d2c8ff,#d6c8fe,#d7c6f9,#d8c3f3,#d8c1ee,#d9bee9,#dabce4,#dbbadf,#dcb7da,#dcb5d5,#ddb2d0,#deb0ca,#dfadc5,#e0abc0,#e0a8bb,#e1a6b6,#e2a4b1,#e3a1ac,#e49fa7,#e49ca2,#e59a9c,#e69797,#e79592,#e8928d,#e99088,#e98e83,#ea8b7e,#eb8979,#ec8674,#ed846e,#ed8169,#ee7f64,#ef7c5f,#f07a5a,#f17755,#f17550,#f2734b,#f37046,#f46e40,#f56b3b,#f56936,#f66631,#f7642c,#f86127,#f95f22,#fa5d1d,#fa5a18,#fb5812,#fc550d,#fd5308,#fe5003,#fe5001,#ff5000)"></i>
<i style="left:107px;top:464px;width:474px;height:3px;background:linear-gradient(90deg,#1253d4,#1655d5,#1d5ad7,#245ed9,#2b62db,#3267dc,#3a6bde,#416fe0,#4873e1,#4f78e3,#567ce5,#5d80e6,#6485e8,#6b89ea,#728dec,#7991ed,#8096ef,#879af1,#8e9ef2,#95a2f4,#9ca6f6,#a3aaf7,#aaaef9,#b0b3fa,#b7b7fb,#bebbfc,#c4bffe,#cbc3fe,#d1c5ff,#d3c4fc,#d4c2f7,#d5bff2,#d6bded,#d7bae8,#d7b8e3,#d8b6de,#d9b3d9,#dab1d3,#dbaece,#dcacc9,#dca9c4,#dda7bf,#dea4ba,#dfa2b5,#e09fb0,#e09dab,#e19ba5,#e298a0,#e3969b,#e49396,#e49191,#e58e8c,#e68c87,#e78982,#e8877d,#e88577,#e98272,#ea806d,#eb7d68,#ec7b63,#ed785e,#ed7659,#ee7354,#ef714e,#f06e49,#f16c44,#f16a3f,#f2673a,#f36535,#f46230,#f5602b,#f55d26,#f65b20,#f7581b,#f85616,#f95411,#fa510c,#fa4f07,#fb4e05,#fc4f04)"></i>
<i style="left:108px;top:467px;width:462px;height:3px;background:linear-gradient(90deg,#1352d5,#1754d7,#1e58d8,#255dda,#2c61dc,#3365dd,#3a69df,#416ee1,#4872e2,#5076e4,#577be6,#5e7fe7,#6583e9,#6c87eb,#738ced,#7a90ee,#8194f0,#8898f2,#8f9cf3,#96a0f5,#9ca5f7,#a3a9f8,#aaadfa,#b1b1fb,#b8b6fc,#bebafd,#c5bdfe,#cbc0fe,#d0c2ff,#d1c0fa,#d2bdf5,#d3bbf0,#d4b8eb,#d4b6e6,#d5b3e1,#d6b1dc,#d7afd6,#d8acd1,#d8aacc,#d9a7c7,#daa5c2,#dba2bd,#dca0b8,#dc9db3,#dd9bae,#de99a8,#df96a3,#e0949e,#e19199,#e18f94,#e28c8f,#e38a8a,#e48785,#e58580,#e5827a,#e68075,#e77e70,#e87b6b,#e97966,#e97661,#ea745c,#eb7157,#ec6f51,#ed6c4c,#ed6a47,#ee6842,#ef653d,#f06338,#f16033,#f25e2e,#f25b29,#f35923,#f4561e,#f55419,#f65114,#f64f0f,#f74d0a,#f84d09)"></i>
<i style="left:109px;top:470px;width:456px;height:3px;background:linear-gradient(90deg,#1350d6,#1753d8,#1f57d9,#265bdb,#2d60dd,#3464de,#3b68e0,#426ce2,#4971e3,#5075e5,#5779e7,#5e7de8,#6582ea,#6c86ec,#738aee,#7a8eef,#8193f1,#8897f3,#8f9bf4,#969ff6,#9da3f8,#a3a7f9,#aaacfa,#b1b0fb,#b8b4fc,#beb8fd,#c5bbfe,#cabeff,#cebefd,#cfbbf8,#d0b9f3,#d0b6ee,#d1b4e9,#d2b1e4,#d3afdf,#d4add9,#d4aad4,#d5a8cf,#d6a5ca,#d7a3c5,#d8a0c0,#d99ebb,#d99bb6,#da99b1,#db96ab,#dc94a6,#dd92a1,#dd8f9c,#de8d97,#df8a92,#e0888d,#e18588,#e18382,#e2807d,#e37e78,#e47c73,#e5796e,#e57769,#e67464,#e7725f,#e86f5a,#e96d54,#ea6a4f,#ea684a,#eb6545,#ec6340,#ed613b,#ee5e36,#ee5c31,#ef592c,#f05726,#f15421,#f2521c,#f24f17,#f34d12,#f44c0e,#f54c0d)"></i>
<i style="left:110px;top:473px;width:450px;height:3px;background:linear-gradient(90deg,#134fd7,#1851d9,#1f56da,#265adc,#2d5ede,#3463df,#3c67e1,#436be3,#4a6fe4,#5174e6,#5878e8,#5f7ce9,#6680eb,#6d85ed,#7489ef,#7b8df0,#8291f2,#8995f4,#8f99f5,#969df7,#9da1f8,#a4a6fa,#abaafb,#b1aefc,#b8b3fd,#beb6fe,#c5b9fe,#cabbff,#ccb9fb,#ccb7f6,#cdb4f1,#ceb2ec,#cfafe7,#d0ade2,#d1aadc,#d1a8d7,#d2a6d2,#d3a3cd,#d4a1c8,#d59ec3,#d59cbe,#d699b9,#d797b4,#d894ae,#d992a9,#d990a4,#da8d9f,#db8b9a,#dc8895,#dd8690,#dd838b,#de8185,#df7e80,#e07c7b,#e17a76,#e27771,#e2756c,#e37267,#e47062,#e56d5d,#e66b57,#e66852,#e7664d,#e86348,#e96143,#ea5f3e,#ea5c39,#eb5a34,#ec572f,#ed5529,#ee5224,#ef501f,#ef4d1a,#f04b15,#f14a12,#f24b11)"></i>
<i style="left:110px;top:476px;width:444px;height:3px;background:linear-gradient(90deg,#144ed8,#184fd9,#1f54db,#2658dd,#2d5cde,#3460e0,#3b65e2,#4269e3,#496de5,#5071e7,#5776e9,#5e7aea,#657eec,#6c82ee,#7387ef,#7a8bf1,#818ff3,#8893f4,#8f97f6,#959bf8,#9c9ff9,#a3a4fa,#aaa8fb,#b0acfc,#b7b0fd,#bdb4fe,#c3b6fe,#c8b8ff,#c9b5fa,#cab3f5,#cbb0f0,#ccaeea,#ccabe5,#cda9e0,#cea6db,#cfa4d6,#d0a2d1,#d19fcc,#d19dc7,#d29ac2,#d398bc,#d495b7,#d593b2,#d590ad,#d68ea8,#d78ba3,#d8899e,#d98799,#d98494,#da828e,#db7f89,#dc7d84,#dd7a7f,#dd787a,#de7575,#df7370,#e0716b,#e16e66,#e26c60,#e2695b,#e36756,#e46451,#e5624c,#e65f47,#e65d42,#e75a3d,#e85838,#e95632,#ea532d,#ea5128,#eb4e23,#ec4c1e,#ed4919,#ee4916,#ef4915)"></i>
<i style="left:111px;top:479px;width:432px;height:3px;background:linear-gradient(90deg,#144cd9,#184eda,#1f52dc,#2657de,#2e5bdf,#355fe1,#3c63e3,#4368e4,#4a6ce6,#5170e8,#5874ea,#5f79eb,#667ded,#6d81ef,#7485f0,#7b89f2,#818df4,#8891f5,#8f95f7,#969af8,#9d9ef9,#a3a2fb,#aaa7fc,#b0abfd,#b7aefe,#bdb1fe,#c3b3ff,#c6b3fd,#c7b1f8,#c8aef3,#c9aced,#c9a9e8,#caa7e3,#cba4de,#cca2d9,#cd9fd4,#cd9dcf,#ce9bca,#cf98c5,#d096bf,#d193ba,#d191b5,#d28eb0,#d38cab,#d489a6,#d587a1,#d5859c,#d68297,#d78091,#d87d8c,#d97b87,#da7882,#da767d,#db7378,#dc7173,#dd6e6e,#de6c69,#de6a63,#df675e,#e06559,#e16254,#e2604f,#e25d4a,#e35b45,#e45840,#e5563a,#e65435,#e65130,#e74f2b,#e84c26,#e94a21,#ea471c,#eb481a)"></i>
<i style="left:112px;top:482px;width:426px;height:3px;background:linear-gradient(90deg,#154ada,#194ddb,#2051dd,#2755df,#2e59e0,#355ee2,#3c62e4,#4366e5,#4a6ae7,#516fe9,#5873eb,#5f77ec,#667bee,#6d7ff0,#7483f1,#7b88f3,#828cf5,#8890f6,#8f94f8,#9698f9,#9d9dfa,#a4a1fb,#aaa5fc,#b0a9fd,#b7acfe,#bdaffe,#c3b1ff,#c4affb,#c5acf6,#c5aaf0,#c6a7eb,#c7a5e6,#c8a2e1,#c9a0dc,#c99dd7,#ca9bd2,#cb99cd,#cc96c8,#cd94c2,#cd91bd,#ce8fb8,#cf8cb3,#d08aae,#d187a9,#d285a4,#d2829f,#d3809a,#d47e94,#d57b8f,#d6798a,#d67685,#d77480,#d8717b,#d96f76,#da6c71,#da6a6c,#db6866,#dc6561,#dd635c,#de6057,#df5e52,#df5b4d,#e05948,#e15643,#e2543d,#e35138,#e34f33,#e44d2e,#e54a29,#e64824,#e74620,#e8471e)"></i>
<i style="left:113px;top:485px;width:420px;height:3px;background:linear-gradient(90deg,#1549db,#1a4bdc,#2150de,#2854e0,#2f58e1,#365ce3,#3d61e5,#4465e6,#4b69e8,#526dea,#5971ec,#6076ed,#677aef,#6e7ef1,#7482f2,#7b86f4,#828af5,#898ef7,#9093f8,#9797f9,#9d9bfa,#a4a0fc,#aaa4fd,#b1a7fd,#b7aafe,#bdacff,#c1adfe,#c1aaf9,#c2a8f3,#c3a5ee,#c4a3e9,#c5a0e4,#c69edf,#c69bda,#c799d5,#c896d0,#c994cb,#ca92c5,#ca8fc0,#cb8dbb,#cc8ab6,#cd88b1,#ce85ac,#ce83a7,#cf80a2,#d07e9d,#d17c97,#d27992,#d2778d,#d37488,#d47283,#d56f7e,#d66d79,#d76a74,#d7686e,#d86669,#d96364,#da615f,#db5e5a,#db5c55,#dc5950,#dd574b,#de5446,#df5240,#df4f3b,#e04d36,#e14b31,#e2482c,#e34627,#e44524,#e54522)"></i>
<i style="left:114px;top:488px;width:414px;height:3px;background:linear-gradient(90deg,#1547dc,#1a4add,#214edf,#2852e1,#2f57e2,#365be4,#3d5fe6,#4463e7,#4b68e9,#526ceb,#5970ed,#6074ee,#6778f0,#6e7cf1,#7580f3,#7c84f5,#8288f6,#898df8,#9091f9,#9796fa,#9d9afb,#a49efc,#aaa2fd,#b1a5fe,#b7a8fe,#bcaaff,#bea8fc,#bfa6f6,#c0a3f1,#c1a1ec,#c29ee7,#c29ce2,#c399dd,#c497d8,#c594d3,#c692ce,#c690c8,#c78dc3,#c88bbe,#c988b9,#ca86b4,#ca83af,#cb81aa,#cc7ea5,#cd7ca0,#ce7a9a,#cf7795,#cf7590,#d0728b,#d17086,#d26d81,#d36b7c,#d36877,#d46671,#d5636c,#d66167,#d75f62,#d75c5d,#d85a58,#d95753,#da554e,#db5249,#db5043,#dc4d3e,#dd4b39,#de4934,#df462f,#e0442a,#e14428,#e24426)"></i>
<i style="left:114px;top:491px;width:408px;height:3px;background:linear-gradient(90deg,#1646dd,#1a48de,#214ce0,#2850e1,#2f55e3,#3659e5,#3d5de7,#4461e8,#4b65ea,#526aec,#596eed,#5f72ef,#6676f1,#6d7af2,#747ef4,#7b82f5,#8286f7,#888bf8,#8f8ff9,#9693fa,#9d98fb,#a39cfc,#aa9ffd,#b0a2fe,#b6a5fe,#bba6ff,#bca4fa,#bda2f5,#bd9ff0,#be9deb,#bf9ae6,#c098e1,#c195dc,#c293d6,#c290d1,#c38ecc,#c48bc7,#c589c2,#c687bd,#c684b8,#c782b3,#c87fae,#c97da8,#ca7aa3,#ca789e,#cb7599,#cc7394,#cd718f,#ce6e8a,#cf6c85,#cf6980,#d0677a,#d16475,#d26270,#d35f6b,#d35d66,#d45a61,#d5585c,#d65657,#d75352,#d7514c,#d84e47,#d94c42,#da493d,#db4738,#db4433,#dc422e,#de422c,#df432a)"></i>
<i style="left:115px;top:494px;width:396px;height:3px;background:linear-gradient(90deg,#1645de,#1a46df,#214be1,#284fe2,#2f53e4,#3657e6,#3d5ce7,#4460e9,#4b64eb,#5268ed,#596cee,#6070f0,#6774f1,#6d78f3,#747cf5,#7b81f6,#8285f7,#8989f9,#908efa,#9692fb,#9d96fc,#a39afd,#aa9dfe,#b0a0fe,#b5a2ff,#b9a2fd,#ba9ff8,#ba9df3,#bb9bee,#bc98e9,#bd96e4,#be93df,#be91d9,#bf8ed4,#c08ccf,#c189ca,#c287c5,#c285c0,#c382bb,#c480b6,#c57db1,#c67bab,#c778a6,#c776a1,#c8739c,#c97197,#ca6e92,#cb6c8d,#cb6a88,#cc6783,#cd657d,#ce6278,#cf6073,#cf5d6e,#d05b69,#d15864,#d2565f,#d3545a,#d35155,#d44f4f,#d54c4a,#d64a45,#d74740,#d8453b,#d84236,#d94131,#db4130)"></i>
<i style="left:116px;top:497px;width:390px;height:3px;background:linear-gradient(90deg,#1743df,#1b45e0,#2249e2,#294de3,#3052e5,#3756e7,#3e5ae8,#455eea,#4c62ec,#5366ed,#596bef,#606ff1,#6773f2,#6e77f4,#757bf6,#7b7ff7,#8284f8,#8988f9,#908cfa,#9691fb,#9d95fc,#a398fd,#aa9bfe,#b09dfe,#b59fff,#b69dfb,#b79bf6,#b899f1,#b996ec,#ba94e7,#ba91e2,#bb8fdc,#bc8cd7,#bd8ad2,#be87cd,#bf85c8,#bf82c3,#c080be,#c17eb9,#c27bb4,#c379ae,#c376a9,#c474a4,#c5719f,#c66f9a,#c76c95,#c76a90,#c8688b,#c96586,#ca6380,#cb607b,#cb5e76,#cc5b71,#cd596c,#ce5667,#cf5462,#d0525d,#d04f58,#d14d52,#d24a4d,#d34848,#d44543,#d4433e,#d54039,#d63f35,#d84033)"></i>
<i style="left:117px;top:500px;width:384px;height:3px;background:linear-gradient(90deg,#1742e0,#1b44e1,#2248e3,#294ce4,#3050e6,#3754e8,#3e59e9,#455deb,#4c61ed,#5365ee,#5a69f0,#616df2,#6771f3,#6e75f5,#757af6,#7c7ef7,#8382f9,#8987fa,#908bfb,#968ffc,#9d93fd,#a496fd,#aa99fe,#af9bff,#b39bfe,#b499f9,#b596f4,#b694ef,#b792ea,#b78fe5,#b88ddf,#b98ada,#ba88d5,#bb85d0,#bb83cb,#bc80c6,#bd7ec1,#be7cbc,#bf79b7,#bf77b1,#c074ac,#c172a7,#c26fa2,#c36d9d,#c36a98,#c46893,#c5668e,#c66389,#c76183,#c85e7e,#c85c79,#c95974,#ca576f,#cb546a,#cc5265,#cc4f60,#cd4d5a,#ce4b55,#cf4850,#d0464b,#d04346,#d14141,#d23e3c,#d33e39,#d53f37)"></i>
<i style="left:118px;top:503px;width:372px;height:3px;background:linear-gradient(90deg,#1740e1,#1c42e2,#2346e4,#2a4be5,#314fe7,#3853e9,#3f57ea,#465bec,#4c5fee,#5363ef,#5a67f1,#616bf3,#686ff4,#6e74f6,#7578f7,#7c7df8,#8381f9,#8a85fa,#9089fb,#968dfc,#9d91fd,#a494fe,#a996fe,#af98ff,#b197fc,#b294f7,#b392f2,#b390ed,#b48de8,#b58be2,#b688dd,#b786d8,#b783d3,#b881ce,#b97ec9,#ba7cc4,#bb7abf,#bc77ba,#bc75b4,#bd72af,#be70aa,#bf6da5,#c06ba0,#c0689b,#c16696,#c26391,#c3618c,#c45f86,#c45c81,#c55a7c,#c65777,#c75572,#c8526d,#c85068,#c94d63,#ca4b5d,#cb4958,#cc4653,#cd444e,#cd4149,#ce3f44,#cf3c3f,#d13d3d)"></i>
<i style="left:119px;top:506px;width:366px;height:3px;background:linear-gradient(90deg,#183ee2,#1c41e3,#2345e5,#2a49e6,#314de8,#3851ea,#3f55eb,#465aed,#4d5eef,#5462f0,#5a66f2,#616af4,#686ef5,#6f72f6,#7677f7,#7d7bf9,#8380fa,#8a84fb,#9088fc,#978cfd,#9d8ffd,#a392fe,#a994fe,#ae95ff,#af92fa,#af90f5,#b08ef0,#b18beb,#b289e5,#b386e0,#b484db,#b481d6,#b57fd1,#b67ccc,#b77ac7,#b877c2,#b875bd,#b973b7,#ba70b2,#bb6ead,#bc6ba8,#bc69a3,#bd669e,#be6499,#bf6194,#c05f8e,#c05d89,#c15a84,#c2587f,#c3557a,#c45375,#c55070,#c54e6b,#c64b66,#c74960,#c8465b,#c94456,#c94251,#ca3f4c,#cb3d47,#cc3b43,#ce3c41)"></i>
<i style="left:120px;top:509px;width:360px;height:3px;background:linear-gradient(90deg,#183de3,#1d3fe4,#2443e6,#2b48e7,#324ce9,#3950eb,#4054ec,#4658ee,#4d5cf0,#5460f1,#5b64f3,#6168f5,#686df6,#6f71f7,#7676f8,#7d7af9,#837efa,#8a82fb,#9086fc,#978afd,#9d8dfe,#a38ffe,#a991ff,#ac90fd,#ac8ef8,#ad8bf3,#ae89ee,#af87e8,#b084e3,#b082de,#b17fd9,#b27dd4,#b37acf,#b478ca,#b475c5,#b573bf,#b671ba,#b76eb5,#b86cb0,#b869ab,#b967a6,#ba64a1,#bb629c,#bc5f97,#bd5d91,#bd5a8c,#be5887,#bf5682,#c0537d,#c15178,#c14e73,#c24c6e,#c34969,#c44763,#c5445e,#c54259,#c64054,#c73d4f,#c83b4a,#c93a46,#cb3b44)"></i>
<i style="left:121px;top:512px;width:354px;height:3px;background:linear-gradient(90deg,#193be4,#1d3ee5,#2442e7,#2b46e8,#324aea,#394eec,#4052ed,#4756ef,#4d5af1,#545ff2,#5b63f4,#6267f5,#696bf6,#7070f7,#7674f8,#7d78fa,#847dfb,#8a81fc,#9084fd,#9788fd,#9d8afe,#a38cfe,#a88eff,#a98cfb,#aa89f6,#ab87f1,#ac85eb,#ac82e6,#ad80e1,#ae7ddc,#af7bd7,#b078d2,#b176cd,#b173c8,#b271c2,#b36ebd,#b46cb8,#b56ab3,#b567ae,#b665a9,#b762a4,#b8609f,#b95d9a,#b95b94,#ba588f,#bb568a,#bc5485,#bd5180,#bd4f7b,#be4c76,#bf4a71,#c0476c,#c14566,#c24261,#c2405c,#c33e57,#c43b52,#c5394d,#c6394a,#c83948)"></i>
<i style="left:121px;top:515px;width:348px;height:3px;background:linear-gradient(90deg,#193ae4,#1d3ce6,#2440e7,#2b44e9,#3148eb,#384cec,#3f50ee,#4654f0,#4d58f1,#535cf3,#5a60f4,#6165f5,#6869f7,#6f6ef8,#7572f9,#7c76fa,#837afb,#897efc,#9082fd,#9685fd,#9c87fe,#a189fe,#a68aff,#a788f9,#a885f4,#a883ef,#a980ea,#aa7ee5,#ab7ce0,#ac79db,#ac77d6,#ad74d1,#ae72cb,#af6fc6,#b06dc1,#b06abc,#b168b7,#b266b2,#b363ad,#b461a8,#b55ea3,#b55c9d,#b65998,#b75793,#b8548e,#b95289,#b94f84,#ba4d7f,#bb4b7a,#bc4875,#bd466f,#bd436a,#be4165,#bf3e60,#c03c5b,#c13956,#c13751,#c3374e,#c5384c)"></i>
<i style="left:122px;top:518px;width:336px;height:3px;background:linear-gradient(90deg,#1939e5,#1d3ae7,#243ee8,#2b42ea,#3246ec,#394aed,#3f4eef,#4653f1,#4d57f2,#545bf4,#5b5ff5,#6264f6,#6868f7,#6f6cf8,#7671f9,#7c75fa,#8379fc,#897dfc,#9080fd,#9683fe,#9c85fe,#a187ff,#a486fc,#a483f7,#a581f2,#a67eed,#a77ce8,#a87ae3,#a877de,#a975d9,#aa72d4,#ab70ce,#ac6dc9,#ad6bc4,#ad68bf,#ae66ba,#af63b5,#b061b0,#b15fab,#b15ca6,#b25aa0,#b3579b,#b45596,#b55291,#b5508c,#b64d87,#b74b82,#b8497d,#b94678,#ba4472,#ba416d,#bb3f68,#bc3c63,#bd3a5e,#be3759,#bf3654,#c03652)"></i>
<i style="left:123px;top:521px;width:330px;height:3px;background:linear-gradient(90deg,#1a37e6,#1e38e8,#243de9,#2b41eb,#3245ed,#3949ee,#404df0,#4651f2,#4d55f3,#5459f4,#5b5ef5,#6262f7,#6967f8,#6f6bf9,#766ffa,#7c73fb,#8277fc,#897bfd,#907efd,#9680fe,#9b82fe,#a084ff,#a181fa,#a27ff5,#a37cf0,#a47aeb,#a577e6,#a575e1,#a673dc,#a770d7,#a86ed1,#a96bcc,#a969c7,#aa66c2,#ab64bd,#ac61b8,#ad5fb3,#ad5dae,#ae5aa9,#af58a3,#b0559e,#b15399,#b25094,#b24e8f,#b34b8a,#b44985,#b54680,#b6447a,#b64275,#b73f70,#b83d6b,#b93a66,#ba3861,#ba355c,#bc3458,#be3556)"></i>
<i style="left:124px;top:524px;width:324px;height:3px;background:linear-gradient(90deg,#1a36e7,#1e37e9,#253bea,#2c3fec,#3243ee,#3947ef,#404bf1,#474ff3,#4e54f4,#5558f5,#5b5df6,#6261f7,#6965f8,#706af9,#766efa,#7c72fb,#8375fc,#8a79fd,#907bfe,#957efe,#9b7fff,#9e7ffd,#9f7df8,#a07af3,#a178ee,#a175e9,#a273e4,#a371df,#a46eda,#a56cd4,#a569cf,#a667ca,#a764c5,#a862c0,#a95fbb,#aa5db6,#aa5ab1,#ab58ab,#ac56a6,#ad53a1,#ae519c,#ae4e97,#af4c92,#b0498d,#b14788,#b24483,#b2427d,#b34078,#b43d73,#b53b6e,#b63869,#b63664,#b7335f,#b9335c,#bb3459)"></i>
<i style="left:125px;top:527px;width:312px;height:3px;background:linear-gradient(90deg,#1b34e8,#1e35ea,#2539eb,#2c3eed,#3342ef,#3a46f0,#404af2,#474ef3,#4e52f4,#5557f5,#5c5bf7,#6260f8,#6964f9,#7068fa,#766cfb,#7c70fc,#8373fd,#8a76fd,#9079fe,#957bfe,#9a7dff,#9c7bfb,#9d78f6,#9d76f1,#9e73ec,#9f71e7,#a06ee2,#a16cdd,#a26ad7,#a267d2,#a365cd,#a462c8,#a560c3,#a65dbe,#a65bb9,#a758b4,#a856ae,#a954a9,#aa51a4,#aa4f9f,#ab4c9a,#ac4a95,#ad4790,#ae458b,#af4286,#af4080,#b03e7b,#b13b76,#b23971,#b3366c,#b33467,#b43162,#b6325f)"></i>
<i style="left:126px;top:530px;width:306px;height:3px;background:linear-gradient(90deg,#1b33e9,#1f34eb,#2638ec,#2c3cee,#3340f0,#3a44f1,#4148f3,#484df4,#4e51f5,#5556f6,#5c5af7,#635ef8,#6962f9,#7066fa,#766afb,#7d6efc,#8371fd,#8a74fd,#8f76fe,#9578ff,#9979fe,#9a76f9,#9a74f4,#9b71ef,#9c6fea,#9d6ce5,#9e6adf,#9e68da,#9f65d5,#a063d0,#a160cb,#a25ec6,#a25bc1,#a359bc,#a456b7,#a554b1,#a652ac,#a74fa7,#a74da2,#a84a9d,#a94898,#aa4593,#ab438e,#ab4089,#ac3e83,#ad3b7e,#ae3979,#af3774,#af346f,#b0326a,#b13065,#b33163)"></i>
<i style="left:128px;top:533px;width:300px;height:3px;background:linear-gradient(90deg,#1c31ea,#2033ec,#2737ed,#2e3bef,#353ff1,#3b43f2,#4248f3,#494cf4,#5051f6,#5755f7,#5d59f8,#645df9,#6a62fa,#7166fb,#7769fc,#7e6dfd,#8570fd,#8a72fe,#9074fe,#9576ff,#9774fb,#9771f6,#986ff1,#996cec,#9a6ae7,#9b68e2,#9b65dd,#9c63d7,#9d60d2,#9e5ecd,#9f5bc8,#9f59c3,#a056be,#a154b9,#a252b4,#a34fae,#a44da9,#a44aa4,#a5489f,#a6459a,#a74395,#a84090,#a83e8b,#a93b86,#aa3980,#ab377b,#ac3476,#ac3271,#ad2f6c,#af2f69,#b13066)"></i>
<i style="left:129px;top:536px;width:288px;height:3px;background:linear-gradient(90deg,#1c2feb,#2131ed,#2735ee,#2e39f0,#353df2,#3c42f3,#4346f4,#4a4bf5,#504ff6,#5754f7,#5e58f8,#645cf9,#6b60fb,#7164fc,#7867fc,#7e6bfd,#846dfd,#8a6ffe,#8f71ff,#9372fe,#946ff9,#956df4,#966aef,#9768ea,#9766e5,#9863e0,#9961da,#9a5ed5,#9b5cd0,#9c59cb,#9c57c6,#9d54c1,#9e52bc,#9f4fb7,#a04db1,#a04bac,#a148a7,#a246a2,#a3439d,#a44198,#a43e93,#a53c8e,#a63989,#a73783,#a8357e,#a83279,#a93074,#aa2d6f,#ac2e6c)"></i>
<i style="left:130px;top:539px;width:282px;height:3px;background:linear-gradient(90deg,#1c2eec,#2130ee,#2834ef,#2e38f1,#353cf2,#3c41f3,#4345f4,#4a49f6,#514ef7,#5752f8,#5e56f9,#645afa,#6b5efb,#7162fc,#7865fd,#7e68fd,#846bfe,#8a6dfe,#8f6fff,#916dfc,#926bf7,#9368f2,#9466ed,#9463e8,#9561e2,#965fdd,#975cd8,#985ad3,#9857ce,#9955c9,#9a52c4,#9b50bf,#9c4dba,#9c4bb4,#9d49af,#9e46aa,#9f44a5,#a041a0,#a13f9b,#a13c96,#a23a91,#a3378c,#a43586,#a53281,#a5307c,#a62e77,#a72c73,#aa2d70)"></i>
<i style="left:131px;top:542px;width:276px;height:3px;background:linear-gradient(90deg,#1d2ced,#212eef,#2832f0,#2f36f2,#363bf3,#3d3ff4,#4344f5,#4a48f6,#514cf7,#5751f8,#5e55f9,#6459fa,#6a5dfc,#7160fc,#7863fd,#7e66fd,#8468fe,#896afe,#8e6bff,#8f69fa,#9066f5,#9064f0,#9161eb,#925fe5,#935de0,#945adb,#9458d6,#9555d1,#9653cc,#9750c7,#984ec2,#994bbd,#9949b7,#9a46b2,#9b44ad,#9c42a8,#9d3fa3,#9d3d9e,#9e3a99,#9f3894,#a0358f,#a13389,#a13084,#a22e7f,#a32c7a,#a52b76,#a72c73)"></i>
<i style="left:132px;top:545px;width:270px;height:3px;background:linear-gradient(90deg,#1d2bee,#212cf0,#2831f1,#2f35f2,#363af3,#3d3ef4,#4442f6,#4a47f7,#514bf8,#584ff9,#5e53fa,#6457fb,#6b5bfc,#725efc,#7861fd,#7e63fe,#8366fe,#8967ff,#8c67fd,#8c64f8,#8d62f3,#8e5fee,#8f5de8,#905ae3,#9158de,#9156d9,#9253d4,#9351cf,#944eca,#954cc5,#9549c0,#9647ba,#9744b5,#9842b0,#9940ab,#993da6,#9a3ba1,#9b389c,#9c3697,#9d3392,#9d318c,#9e2e87,#9f2c82,#a02a7d,#a22a7a,#a42b77)"></i>
<i style="left:133px;top:548px;width:258px;height:3px;background:linear-gradient(90deg,#1e29ef,#222bf0,#292ff2,#3034f3,#3638f4,#3d3df5,#4441f6,#4b45f7,#514af8,#584ef9,#5e52fa,#6455fb,#6b59fc,#725cfd,#785ffd,#7e61fe,#8363fe,#8865ff,#8962fb,#8a60f6,#8b5df1,#8c5beb,#8d58e6,#8d56e1,#8e54dc,#8f51d7,#904fd2,#914ccd,#914ac8,#9247c3,#9345bd,#9442b8,#9540b3,#953eae,#963ba9,#9739a4,#98369f,#99349a,#9a3195,#9a2f8f,#9b2c8a,#9c2a85,#9d2880,#9f297d)"></i>
<i style="left:134px;top:551px;width:252px;height:3px;background:linear-gradient(90deg,#1e28f0,#222af1,#292ef2,#3033f3,#3737f4,#3e3bf6,#4440f7,#4b44f8,#5148f9,#584cfa,#5e50fb,#6554fc,#6b57fc,#725afd,#785cfd,#7d5efe,#8360ff,#8660fe,#875ef9,#885bf4,#8959ee,#8956e9,#8a54e4,#8b52df,#8c4fda,#8d4dd5,#8e4ad0,#8e48cb,#8f45c6,#9043c0,#9140bb,#923eb6,#923bb1,#9339ac,#9437a7,#9534a2,#96329d,#962f98,#972d92,#982a8d,#992888,#9a2784,#9d2881)"></i>
<i style="left:135px;top:554px;width:246px;height:3px;background:linear-gradient(90deg,#1f27f1,#2328f2,#2a2df3,#3031f4,#3736f5,#3e3af6,#443ef7,#4b42f8,#5146f9,#584afa,#5e4efb,#6552fc,#6c55fd,#7257fd,#775afe,#7d5cfe,#825eff,#845cfc,#8559f7,#8657f1,#8654ec,#8752e7,#884fe2,#894ddd,#8a4bd8,#8a48d3,#8b46ce,#8c43c9,#8d41c3,#8e3ebe,#8e3cb9,#8f39b4,#9037af,#9135aa,#9232a5,#9230a0,#932d9b,#942b95,#952890,#96268b,#982687,#9a2784)"></i>
<i style="left:136px;top:557px;width:240px;height:3px;background:linear-gradient(90deg,#1f26f1,#2327f2,#2a2cf3,#3130f4,#3734f5,#3e39f7,#453df8,#4b41f9,#5145fa,#5849fb,#5f4cfc,#6550fc,#6c53fd,#7255fd,#7757fe,#7c59fe,#815aff,#8257fa,#8255f4,#8352ef,#8450ea,#854de5,#864be0,#8649db,#8746d6,#8844d1,#8941cc,#8a3fc6,#8a3cc1,#8b3abc,#8c37b7,#8d35b2,#8e32ad,#8f30a8,#8f2ea3,#902b9d,#912998,#922693,#93248e,#95248b,#972588)"></i>
<i style="left:138px;top:560px;width:228px;height:3px;background:linear-gradient(90deg,#2024f2,#2527f3,#2b2bf4,#322ff5,#3934f6,#3f38f7,#463cf8,#4c40f9,#5244fb,#5948fb,#604bfc,#674efd,#6d51fd,#7253fe,#7755fe,#7d57ff,#7f55fc,#7f52f7,#8050f1,#814dec,#824be7,#8349e2,#8346dd,#8444d8,#8541d3,#863fce,#873cc9,#873ac3,#8837be,#8935b9,#8a32b4,#8b30af,#8c2eaa,#8c2ba5,#8d29a0,#8e269b,#8f2495,#902391,#93248e)"></i>
<i style="left:139px;top:563px;width:222px;height:3px;background:linear-gradient(90deg,#2023f2,#2525f3,#2c2af5,#322ef6,#3932f7,#4036f8,#463af9,#4c3efa,#5242fb,#5946fc,#6049fc,#664cfd,#6c4efd,#7250fe,#7752fe,#7b53ff,#7c50fa,#7d4ef4,#7e4bef,#7f49ea,#8047e5,#8044e0,#8142db,#823fd6,#833dd1,#843acc,#8438c6,#8535c1,#8633bc,#8730b7,#882eb2,#882cad,#8929a8,#8a27a3,#8b249e,#8c2298,#8e2194,#902391)"></i>
<i style="left:140px;top:566px;width:216px;height:3px;background:linear-gradient(90deg,#2122f3,#2524f4,#2c28f5,#332cf6,#3931f7,#4035f8,#4639f9,#4c3dfa,#5340fb,#5a44fc,#6047fc,#6649fd,#6c4cfe,#714efe,#774fff,#794efd,#7a4cf7,#7b49f2,#7c47ed,#7c44e8,#7d42e3,#7e40de,#7f3dd9,#803bd4,#8038cf,#8136c9,#8233c4,#8331bf,#842eba,#842cb5,#852ab0,#8627ab,#8725a6,#8822a0,#89209b,#8b2098,#8e2194)"></i>
<i style="left:141px;top:569px;width:204px;height:3px;background:linear-gradient(90deg,#2221f4,#2522f4,#2c27f6,#332bf7,#392ff8,#4033f9,#4637fa,#4c3bfb,#533efc,#5a42fc,#6044fd,#6647fd,#6c49fe,#714bfe,#764cff,#774afa,#7847f5,#7845f0,#7942eb,#7a40e6,#7b3ee1,#7c3bdc,#7c39d7,#7d36d2,#7e34cc,#7f31c7,#802fc2,#812cbd,#812ab8,#8227b3,#8325ae,#8423a9,#8520a3,#861e9f,#881f9b)"></i>
<i style="left:142px;top:572px;width:198px;height:3px;background:linear-gradient(90deg,#2220f4,#2621f5,#2c25f6,#332af7,#392ef8,#4032f9,#4635fa,#4d39fb,#543cfc,#5a3ffc,#6042fd,#6644fe,#6b46fe,#7148ff,#7448fd,#7545f8,#7543f3,#7640ee,#773ee9,#783be4,#7939df,#7937da,#7a34d4,#7b32cf,#7c2fca,#7d2dc5,#7d2ac0,#7e28bb,#7f25b6,#8023b1,#8121ac,#811ea6,#831da2,#861e9e)"></i>
<i style="left:144px;top:575px;width:192px;height:3px;background:linear-gradient(90deg,#231ef5,#2720f6,#2e25f7,#3429f8,#3b2df9,#4131fa,#4734fb,#4e38fc,#553bfc,#5b3efd,#6140fd,#6642fe,#6c44fe,#7145ff,#7243fa,#7240f5,#733ef0,#743beb,#7539e6,#7637e1,#7634dc,#7732d7,#782fd2,#792dcc,#7a2ac7,#7a28c2,#7b25bd,#7c23b8,#7d21b3,#7e1eae,#7e1ca9,#811ca5,#841da1)"></i>
<i style="left:145px;top:578px;width:180px;height:3px;background:linear-gradient(90deg,#231df5,#271ff6,#2e23f7,#3427f8,#3a2bfa,#412ffb,#4832fb,#4e36fc,#5539fc,#5b3bfd,#603dfe,#663ffe,#6b41ff,#6e41fd,#6f3ef8,#703cf3,#7139ee,#7237e9,#7235e4,#7332df,#7430da,#752dd5,#762bcf,#7628ca,#7726c5,#7823c0,#7921bb,#7a1eb6,#7b1cb1,#7c1aac,#7e1ba8)"></i>
<i style="left:146px;top:581px;width:174px;height:3px;background:linear-gradient(90deg,#241cf6,#271df7,#2e22f8,#3426f9,#3a29fa,#412dfb,#4830fb,#4f34fc,#5536fd,#5b39fd,#603bfe,#653dfe,#6b3fff,#6c3cfb,#6d3af6,#6e37f1,#6e35ec,#6f33e7,#7030e2,#712edd,#722bd7,#7329d2,#7326cd,#7424c8,#7521c3,#761fbe,#771cb9,#771ab4,#7919af,#7c1aab)"></i>
<i style="left:148px;top:584px;width:168px;height:3px;background:linear-gradient(90deg,#251bf7,#291df8,#2f21f9,#3525fa,#3c28fb,#432cfb,#492ffc,#5032fc,#5634fd,#5b37fe,#6138fe,#663aff,#693afd,#6a37f8,#6b35f3,#6b33ee,#6c30e9,#6d2ee4,#6e2bdf,#6f29da,#7026d5,#7024cf,#7121ca,#721fc5,#731cc0,#741abb,#7418b6,#7718b2,#7a19ae)"></i>
<i style="left:149px;top:587px;width:156px;height:3px;background:linear-gradient(90deg,#251af7,#291bf8,#2f1ff9,#3523fa,#3c26fb,#432afb,#492dfc,#5030fd,#5532fd,#5b34fe,#6036fe,#6538ff,#6735fb,#6833f6,#6830f1,#692eec,#6a2ce7,#6b29e2,#6c27dd,#6c24d8,#6d22d2,#6e1fcd,#6f1dc8,#701ac3,#7018be,#7216b9,#7517b5)"></i>
<i style="left:151px;top:590px;width:150px;height:3px;background:linear-gradient(90deg,#2619f8,#2a1af9,#301efa,#3722fb,#3e25fb,#4428fc,#4a2bfc,#502dfd,#5630fe,#5b32fe,#6134ff,#6433fd,#6530f8,#652ef3,#662cee,#6729e9,#6827e4,#6924df,#6922da,#6a1fd5,#6b1dcf,#6c1aca,#6d18c5,#6d16c0,#7015bc,#7316b8)"></i>
<i style="left:152px;top:593px;width:144px;height:3px;background:linear-gradient(90deg,#2617f8,#2a18f9,#301cfa,#3720fb,#3e23fb,#4426fc,#4a29fd,#502bfd,#552dfe,#5b2ffe,#6031ff,#612efb,#622cf6,#632af1,#6427ec,#6525e7,#6522e2,#6620dd,#671dd8,#681bd2,#6918cd,#6a16c8,#6a13c3,#6d14bf,#7015bb)"></i>
<i style="left:154px;top:596px;width:132px;height:3px;background:linear-gradient(90deg,#2716f9,#2b17fa,#321bfb,#381efb,#3f21fc,#4524fc,#4b27fd,#5129fe,#562bfe,#5b2dff,#5e2cfd,#5f2af8,#6027f3,#6125ee,#6222e9,#6220e4,#631ddf,#641bda,#6518d5,#6616cf,#6713ca,#6812c5,#6b13c1)"></i>
<i style="left:156px;top:599px;width:126px;height:3px;background:linear-gradient(90deg,#2815fa,#2c16fa,#331afb,#3a1dfc,#4020fc,#4622fd,#4c24fd,#5126fe,#5628fe,#5b2aff,#5c27fa,#5d25f5,#5e22f0,#5f20eb,#601de6,#601be1,#6118dc,#6216d7,#6313d2,#6411cc,#6611c8,#6913c4)"></i>
<i style="left:157px;top:602px;width:114px;height:3px;background:linear-gradient(90deg,#2814fa,#2d14fb,#3318fb,#3a1bfc,#401dfc,#4620fd,#4b22fe,#5124fe,#5626ff,#5925fd,#5a23f8,#5b20f3,#5c1eee,#5c1be9,#5d19e4,#5e16df,#5f14da,#6011d5,#600fcf,#6410cb)"></i>
<i style="left:159px;top:605px;width:108px;height:3px;background:linear-gradient(90deg,#2a12fa,#2e13fb,#3516fc,#3b19fc,#411bfd,#461efd,#4c1ffe,#5121fe,#5623ff,#5720fa,#581ef5,#591bf0,#5919eb,#5a16e6,#5b14e1,#5c11dc,#5d0fd7,#5f0ed2,#6210ce)"></i>
<i style="left:161px;top:608px;width:102px;height:3px;background:linear-gradient(90deg,#2b11fb,#2f11fb,#3614fc,#3c17fc,#4119fd,#471bfe,#4c1dfe,#521fff,#541efd,#551bf8,#5619f2,#5616ed,#5714e8,#5811e3,#590fde,#5a0dd9,#5d0dd4,#600fd0)"></i>
<i style="left:163px;top:611px;width:90px;height:3px;background:linear-gradient(90deg,#2c10fb,#3110fc,#3712fc,#3d15fd,#4217fd,#4719fe,#4d1bfe,#511bff,#5219fa,#5316f5,#5314ef,#5411ea,#550fe5,#560de0,#570bdb,#5b0dd7)"></i>
<i style="left:165px;top:614px;width:84px;height:3px;background:linear-gradient(90deg,#2e0efb,#320efc,#3810fd,#3d13fd,#4315fe,#4817fe,#4d18ff,#4f16fc,#5014f7,#5011f2,#510fec,#520de7,#530ae2,#560bdd,#590cd9)"></i>
<i style="left:168px;top:617px;width:72px;height:3px;background:linear-gradient(90deg,#300cfc,#330cfc,#390ffd,#3f11fe,#4413fe,#4915ff,#4c13fd,#4d11f8,#4e0ff3,#4e0cee,#4f0ae9,#5109e4,#540adf)"></i>
<i style="left:171px;top:620px;width:66px;height:3px;background:linear-gradient(90deg,#310bfc,#350bfd,#3b0dfd,#400ffe,#4511ff,#4911fe,#4a0ef9,#4b0cf4,#4b09ef,#4c07ea,#5008e5,#530ae1)"></i>
<i style="left:174px;top:623px;width:54px;height:3px;background:linear-gradient(90deg,#3309fd,#3709fd,#3c0bfe,#410dfe,#460eff,#470bfb,#4809f5,#4906f0,#4b06eb,#4f08e7)"></i>
<i style="left:177px;top:626px;width:42px;height:3px;background:linear-gradient(90deg,#3507fd,#3807fe,#3d09fe,#430bff,#4408fc,#4506f7,#4604f2,#4a06ed)"></i>
<i style="left:181px;top:629px;width:36px;height:3px;background:linear-gradient(90deg,#3705fe,#3a05fe,#3f07ff,#4105fc,#4203f7,#4604f2,#4906ed)"></i>
<i style="left:184px;top:632px;width:24px;height:3px;background:linear-gradient(90deg,#3804fe,#3c03ff,#3f02fe,#4102f8,#4504f4)"></i>
<i style="left:188px;top:635px;width:12px;height:3px;background:linear-gradient(90deg,#3a02ff,#3d00fe,#4102f9)"></i></div>
<div class="wl" style="left:129.80px;top:73.00px;transform:scaleX(0.8378)">520nm</div>
<div class="wl" style="left:185.80px;top:92.00px;transform:scaleX(0.8378)">530nm</div>
<div class="wl" style="left:236.80px;top:127.00px;transform:scaleX(0.8378)">540nm</div>
<div class="wl" style="left:286.80px;top:168.00px;transform:scaleX(0.8378)">550nm</div>
<div class="wl" style="left:335.80px;top:214.00px;transform:scaleX(0.8378)">560nm</div>
<div class="wl" style="left:384.80px;top:261.00px;transform:scaleX(0.8378)">570nm</div>
<div class="wl" style="left:431.80px;top:306.00px;transform:scaleX(0.8378)">580nm</div>
<div class="wl" style="left:474.80px;top:348.00px;transform:scaleX(0.8378)">590nm</div>
<div class="wl" style="left:510.80px;top:383.00px;transform:scaleX(0.8378)">600nm</div>
<div class="wl" style="left:537.80px;top:409.00px;transform:scaleX(0.8378)">610nm</div>
<div class="wl" style="left:554.80px;top:426.00px;transform:scaleX(0.8378)">620nm</div>
<div class="wl" style="left:573.80px;top:444.00px;transform:scaleX(0.8378)">640nm</div>
<div class="wl" style="left:584.80px;top:455.00px;transform:scaleX(0.8378)">780nm</div>
<div class="wl" style="left:88.80px;top:130.00px;transform:scaleX(0.8378)">510nm</div>
<div class="wl" style="left:84.80px;top:272.00px;transform:scaleX(0.8378)">500nm</div>
<div class="wl" style="left:65.80px;top:435.00px;transform:scaleX(0.8378)">490nm</div>
<div class="wl" style="left:97.80px;top:544.00px;transform:scaleX(0.8378)">480nm</div>
<div class="wl" style="left:119.80px;top:594.00px;transform:scaleX(0.8378)">470nm</div>
<div class="wl" style="left:133.80px;top:613.00px;transform:scaleX(0.8378)">460nm</div>
<div class="wl" style="left:142.80px;top:621.00px;transform:scaleX(0.8378)">450nm</div>
<div class="wl" style="left:154.80px;top:630.00px;transform:scaleX(0.8378)">380nm</div>
<div class="wl" style="left:308.40px;top:409.00px;transform:scaleX(0.8824)">CIE White Point</div>
<svg class="a" style="left:0;top:0" width="733" height="687" viewBox="0 0 733 687"><path d="M123 79.5h3M124.5 78v3M179 98.5h3M180.5 97v3M230 133.5h3M231.5 132v3M280 174.5h3M281.5 173v3M329 220.5h3M330.5 219v3M378 267.5h3M379.5 266v3M425 312.5h3M426.5 311v3M468 354.5h3M469.5 353v3M504 389.5h3M505.5 388v3M531 415.5h3M532.5 414v3M548 432.5h3M549.5 431v3M567 450.5h3M568.5 449v3M578 461.5h3M579.5 460v3M82 136.5h3M83.5 135v3M78 278.5h3M79.5 277v3M103 441.5h3M104.5 440v3M135 550.5h3M136.5 549v3M157 600.5h3M158.5 599v3M171 619.5h3M172.5 618v3M180 627.5h3M181.5 626v3M192 636.5h3M193.5 635v3M302 415.5h3M303.5 414v3" stroke="#808080" stroke-width="1" fill="none" shape-rendering="crispEdges"/><path d="M242.7 476.6 L243.1 476.1 L243.5 475.5 L244.0 474.8 L244.6 474.1 L245.2 473.3 L245.9 472.3 L246.6 471.3 L247.5 470.1 L248.4 468.9 L249.5 467.4 L250.8 465.8 L252.2 464.0 L253.7 462.0 L255.5 459.7 L257.5 457.2 L259.8 454.3 L262.4 451.2 L265.4 447.7 L268.7 443.9 L272.5 439.6 L276.8 435.0 L281.7 430.0 L287.1 424.5 L293.3 418.7 L300.1 412.6 L307.8 406.2 L316.3 399.6 L325.7 393.0 L336.0 386.4 L347.1 380.1 L358.7 374.4 L371.0 369.4 L383.7 365.4 L397.0 362.5 L410.5 361.0 L424.2 360.9 L437.7 362.3 L450.6 365.2 L462.5 369.1 L468.4 371.5 L477.0 375.7 L485.8 380.6 L495.0 386.4 L504.1 392.9 L513.7 400.6 L523.2 408.4 L529.5 414.5 L540.0 424.5 L548.5 433.0" stroke="#767676" stroke-width="1" fill="none" shape-rendering="crispEdges"/><path d="M142.5 35V639M211.5 35V639M280.5 35V639M349.5 35V639M417.5 35V639M486.5 35V639M555.5 35V639M624.5 35V639M73 605.5H694M73 572.5H694M73 538.5H694M73 505.5H694M73 471.5H694M73 438.5H694M73 404.5H694M73 371.5H694M73 337.5H694M73 303.5H694M73 270.5H694M73 236.5H694M73 203.5H694M73 169.5H694M73 136.5H694M73 102.5H694M73 69.5H694" stroke="#9c9c00" stroke-width="1" fill="none" shape-rendering="crispEdges"/><path d="M280.5 409.5L376.5 349.5V383.5L280.5 454.5ZM376.5 349.5L417.5 344.5V383.5H376.5" stroke="#000" stroke-width="1" fill="none" shape-rendering="crispEdges"/><rect x="279" y="408" width="3" height="3" fill="#000"/><rect x="279" y="453" width="3" height="3" fill="#000"/><rect x="375" y="348" width="3" height="3" fill="#000"/><rect x="375" y="382" width="3" height="3" fill="#000"/><rect x="416" y="343" width="3" height="3" fill="#000"/><rect x="416" y="382" width="3" height="3" fill="#000"/><path d="M333.5 35V639M73 387.5H694" stroke="#ff0000" stroke-width="1" fill="none" shape-rendering="crispEdges"/><path d="M332 385h3v1h1v3h-1v1h-3v-1h-1v-3h1z" fill="#ff0000" shape-rendering="crispEdges"/></svg>
</div></div>
<svg class="a" style="left:0;top:0" width="733" height="687"><path d="M66 639.5h5M73.5 641v5M66 572.5h5M142.5 641v5M66 505.5h5M211.5 641v5M66 438.5h5M280.5 641v5M66 371.5h5M349.5 641v5M66 303.5h5M417.5 641v5M66 236.5h5M486.5 641v5M66 169.5h5M555.5 641v5M66 102.5h5M624.5 641v5M66 35.5h5M693.5 641v5" stroke="#000" stroke-width="1" shape-rendering="crispEdges"/></svg>
<div class="ax" style="right:669px;top:632.5px">0.0000</div>
<div class="ax" style="left:42.5px;top:647px;width:60px;text-align:center">0.0000</div>
<div class="ax" style="right:669px;top:565.5px">0.1000</div>
<div class="ax" style="left:111.5px;top:647px;width:60px;text-align:center">0.1000</div>
<div class="ax" style="right:669px;top:498.5px">0.2000</div>
<div class="ax" style="left:180.5px;top:647px;width:60px;text-align:center">0.2000</div>
<div class="ax" style="right:669px;top:431.5px">0.3000</div>
<div class="ax" style="left:249.5px;top:647px;width:60px;text-align:center">0.3000</div>
<div class="ax" style="right:669px;top:364.5px">0.4000</div>
<div class="ax" style="left:318.5px;top:647px;width:60px;text-align:center">0.4000</div>
<div class="ax" style="right:669px;top:296.5px">0.5000</div>
<div class="ax" style="left:386.5px;top:647px;width:60px;text-align:center">0.5000</div>
<div class="ax" style="right:669px;top:229.5px">0.6000</div>
<div class="ax" style="left:455.5px;top:647px;width:60px;text-align:center">0.6000</div>
<div class="ax" style="right:669px;top:162.5px">0.7000</div>
<div class="ax" style="left:524.5px;top:647px;width:60px;text-align:center">0.7000</div>
<div class="ax" style="right:669px;top:95.5px">0.8000</div>
<div class="ax" style="left:593.5px;top:647px;width:60px;text-align:center">0.8000</div>
<div class="ax" style="right:669px;top:28.5px">0.9000</div>
<div class="ax" style="left:662.5px;top:647px;width:60px;text-align:center">0.9000</div>
<div class="ax" style="left:381px;top:666px;font-size:12px">x</div>
<div class="ax" style="left:14px;top:343px;font-size:12px;transform:rotate(-90deg);transform-origin:0 0">y</div>
</body></html>
